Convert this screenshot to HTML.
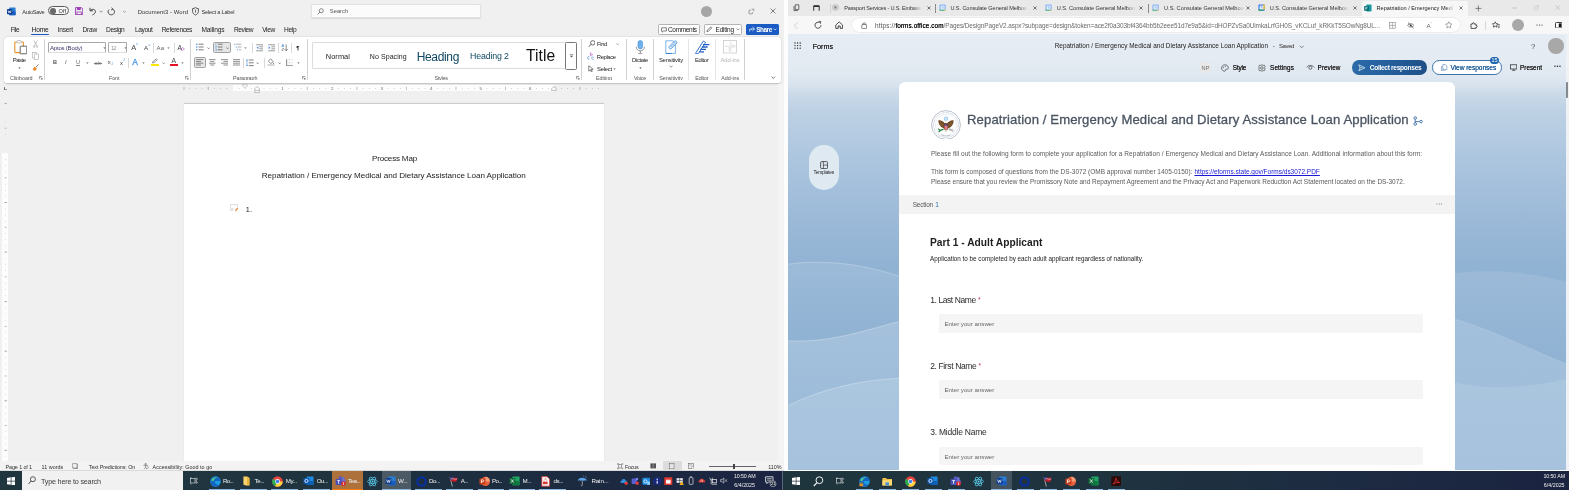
<!DOCTYPE html>
<html lang="en"><head><meta charset="utf-8"><title>Word and Microsoft Forms</title>
<style>
html,body{margin:0;padding:0;}
body{width:1569px;height:490px;overflow:hidden;position:relative;background:#f0f0f0;font-family:"Liberation Sans", sans-serif;}
div,span,svg,a{position:absolute;box-sizing:border-box;}
span,a{white-space:nowrap;line-height:1;display:block;}
a{text-decoration:underline;}
.root{left:0;top:0;width:1569px;height:490px;overflow:hidden;will-change:transform;}
</style></head>
<body>
<div class="root">
<div style="left:0px;top:0px;width:784.2px;height:471.5px;background:#f0f0f0;"></div>
<div style="left:784.2px;top:0px;width:4.0px;height:471.5px;background:#fdfdfd;"></div>
<svg style="left:7px;top:7px;" width="9" height="9" viewBox="0 0 9 9"><rect x="2.2" y="0.6" width="6.4" height="7.6" rx="0.8" fill="#2b7cd3"/><rect x="2.2" y="4.4" width="6.4" height="3.8" fill="#185abd"/><rect x="0" y="2" width="5.2" height="5.2" rx="0.6" fill="#103f91"/><path d="M1.1 3.3 L1.9 6 L2.6 4 L3.3 6 L4.1 3.3" stroke="#fff" stroke-width="0.6" fill="none"/></svg>
<span style="left:22.30px;top:8px;font-size:5.6px;height:8px;line-height:8px;color:#333;letter-spacing:-0.271px;">AutoSave</span>
<div style="left:48.2px;top:6.4px;width:20.7px;height:9.0px;background:#f8f8f8;border:0.65px solid #5a5a5a;border-radius:4.5px;"></div>
<div style="left:50.0px;top:8.1px;width:5.7px;height:5.7px;background:#6a6a6a;border-radius:50%;"></div>
<span style="left:58.60px;top:7px;font-size:5.6px;height:8px;line-height:8px;color:#333;letter-spacing:0.080px;">Off</span>
<svg style="left:75px;top:7px;" width="8.4" height="8.4" viewBox="0 0 8.4 8.4"><path d="M0.6 0.6 H6.4 L7.8 2 V7.8 H0.6 Z" fill="none" stroke="#9b3fb5" stroke-width="1"/><rect x="2" y="0.8" width="3.8" height="2.2" fill="#9b3fb5"/><rect x="2" y="5" width="4.4" height="2.8" fill="none" stroke="#9b3fb5" stroke-width="0.8"/></svg>
<svg style="left:88.5px;top:7px;" width="8" height="8.5" viewBox="0 0 8 8.5"><path d="M1 0.8 V3.8 H4" fill="none" stroke="#333" stroke-width="0.9"/><path d="M1.2 3.6 C3 1.6 6.4 2 6.4 4.6 C6.4 6.2 5 7.2 3.4 8" fill="none" stroke="#333" stroke-width="0.9"/></svg>
<svg style="left:99px;top:10px;" width="4" height="3" viewBox="0 0 4 3"><path d="M0.5 0.7 L2 2.2 L3.5 0.7" fill="none" stroke="#666" stroke-width="0.7"/></svg>
<svg style="left:106.5px;top:7px;" width="8.5" height="8.5" viewBox="0 0 8.5 8.5"><path d="M4.6 0.6 L6 2.2 L4 3" fill="none" stroke="#333" stroke-width="0.8"/><path d="M6 2.4 C8.4 3.6 8 7.6 4.4 7.8 C1.2 7.8 0.2 4.4 2 2.6" fill="none" stroke="#333" stroke-width="0.9"/></svg>
<svg style="left:121.5px;top:10px;" width="5" height="3" viewBox="0 0 5 3"><path d="M1 1 L2.5 2.3 L4 1" fill="none" stroke="#888" stroke-width="0.7"/></svg>
<span style="left:137.70px;top:8px;font-size:5.9px;height:8px;line-height:8px;color:#333;letter-spacing:0.065px;">Document3  -  Word</span>
<svg style="left:191.5px;top:7.2px;" width="7" height="8.5" viewBox="0 0 7 8.5"><path d="M3.5 0.6 C4.6 1.4 5.6 1.6 6.4 1.6 V4.4 C6.4 6.2 5 7.4 3.5 8 C2 7.4 0.6 6.2 0.6 4.4 V1.6 C1.4 1.6 2.4 1.4 3.5 0.6 Z" fill="none" stroke="#333" stroke-width="0.8"/><path d="M3.5 2.6 V5.6" stroke="#333" stroke-width="0.7"/></svg>
<span style="left:201.50px;top:8px;font-size:5.6px;height:8px;line-height:8px;color:#333;letter-spacing:-0.197px;">Select a Label</span>
<div style="left:310.7px;top:3.6px;width:170.6px;height:14.3px;background:#fbfbfb;border:0.6px solid #e2e2e2;border-radius:2px;box-shadow:0 0.5px 1px rgba(0,0,0,0.10);"></div>
<svg style="left:316.5px;top:7.5px;" width="7" height="7" viewBox="0 0 7 7"><circle cx="4.3" cy="2.7" r="2" fill="none" stroke="#555" stroke-width="0.7"/><path d="M2.9 4.2 L0.6 6.4" stroke="#555" stroke-width="0.7"/></svg>
<span style="left:329.80px;top:7px;font-size:5.8px;height:8px;line-height:8px;color:#555;letter-spacing:0.004px;">Search</span>
<div style="left:700.7px;top:5.6px;width:11.3px;height:11.3px;background:#a6a6a6;border-radius:50%;"></div>
<svg style="left:747.5px;top:8px;" width="7" height="7" viewBox="0 0 7 7"><path d="M3 2.2 H1.6 C1.2 2.2 1 2.4 1 2.8 V5.2 C1 5.6 1.2 5.8 1.6 5.8 H4 C4.4 5.8 4.6 5.6 4.6 5.2 V4.2" fill="none" stroke="#666" stroke-width="0.6"/><path d="M3.6 1.2 H5.8 V3.2" fill="none" stroke="#666" stroke-width="0.6"/></svg>
<svg style="left:770.4px;top:8.4px;" width="6" height="6" viewBox="0 0 6 6"><path d="M0.6 0.6 L5.4 5.4 M5.4 0.6 L0.6 5.4" stroke="#333" stroke-width="0.6"/></svg>
<span style="left:10.80px;top:25px;font-size:6.6px;height:9px;line-height:9px;color:#222;letter-spacing:-0.606px;">File</span>
<span style="left:31.60px;top:25px;font-size:6.6px;height:9px;line-height:9px;color:#111;letter-spacing:-0.173px;">Home</span>
<span style="left:57.60px;top:25px;font-size:6.6px;height:9px;line-height:9px;color:#222;letter-spacing:-0.183px;">Insert</span>
<span style="left:82.60px;top:25px;font-size:6.6px;height:9px;line-height:9px;color:#222;letter-spacing:-0.248px;">Draw</span>
<span style="left:106.00px;top:25px;font-size:6.6px;height:9px;line-height:9px;color:#222;letter-spacing:-0.355px;">Design</span>
<span style="left:135.00px;top:25px;font-size:6.6px;height:9px;line-height:9px;color:#222;letter-spacing:-0.402px;">Layout</span>
<span style="left:161.70px;top:25px;font-size:6.6px;height:9px;line-height:9px;color:#222;letter-spacing:-0.343px;">References</span>
<span style="left:201.50px;top:25px;font-size:6.6px;height:9px;line-height:9px;color:#222;letter-spacing:-0.148px;">Mailings</span>
<span style="left:234.00px;top:25px;font-size:6.6px;height:9px;line-height:9px;color:#222;letter-spacing:-0.438px;">Review</span>
<span style="left:262.20px;top:25px;font-size:6.6px;height:9px;line-height:9px;color:#222;letter-spacing:-0.347px;">View</span>
<span style="left:284.00px;top:25px;font-size:6.6px;height:9px;line-height:9px;color:#222;letter-spacing:-0.291px;">Help</span>
<div style="left:31.4px;top:33.8px;width:17.3px;height:1.1px;background:#185abd;border-radius:0.5px;"></div>
<div style="left:658.2px;top:24.0px;width:41.6px;height:11.0px;background:#fdfdfd;border:0.6px solid #b4b4b4;border-radius:1.5px;"></div>
<svg style="left:660.8px;top:26.6px;" width="6" height="6" viewBox="0 0 6 6"><path d="M0.6 0.8 H5.4 V4 H2.4 L1.2 5.2 V4 H0.6 Z" fill="none" stroke="#333" stroke-width="0.6"/></svg>
<span style="left:668.00px;top:25px;font-size:6.5px;height:9px;line-height:9px;color:#1a1a1a;letter-spacing:-0.330px;">Comments</span>
<div style="left:704.2px;top:24.0px;width:37.6px;height:11.0px;background:#fdfdfd;border:0.6px solid #b4b4b4;border-radius:1.5px;"></div>
<svg style="left:706.4px;top:26.4px;" width="7" height="6.4" viewBox="0 0 7 6.4"><path d="M0.8 5.6 L1.4 4 L5 0.8 L6 1.8 L2.4 5.2 Z" fill="none" stroke="#333" stroke-width="0.6"/></svg>
<span style="left:715.60px;top:25px;font-size:6.5px;height:9px;line-height:9px;color:#1a1a1a;letter-spacing:-0.239px;">Editing</span>
<svg style="left:736px;top:28.4px;" width="4" height="3" viewBox="0 0 4 3"><path d="M0.6 0.6 L2 2 L3.4 0.6" fill="none" stroke="#555" stroke-width="0.6"/></svg>
<div style="left:746.2px;top:24.0px;width:33.0px;height:11.0px;background:#1b5cc4;border-radius:1.5px;"></div>
<svg style="left:748.6px;top:26.4px;" width="6.4" height="6.4" viewBox="0 0 6.4 6.4"><path d="M0.7 5.6 V3.2 H3 M3.4 1 L5.6 3 L3.4 5 M5.4 3 H2.2" fill="none" stroke="#fff" stroke-width="0.7"/></svg>
<span style="left:756.20px;top:25px;font-size:6.5px;height:9px;line-height:9px;color:#fff;font-weight:700;letter-spacing:-0.496px;">Share</span>
<svg style="left:773.2px;top:28.4px;" width="4" height="3" viewBox="0 0 4 3"><path d="M0.6 0.6 L2 2 L3.4 0.6" fill="none" stroke="#fff" stroke-width="0.6"/></svg>
<div style="left:4px;top:36.8px;width:776.6px;height:46.0px;background:#ffffff;border-radius:3.5px;box-shadow:0 0.6px 1.6px rgba(0,0,0,0.22);"></div>
<svg style="left:13.6px;top:40.3px;" width="13.6" height="14.4" viewBox="0 0 13.6 14.4"><rect x="0.8" y="2" width="8.6" height="10.6" rx="0.8" fill="#fff" stroke="#e8912d" stroke-width="1.1"/><rect x="3" y="0.6" width="4.2" height="2.4" rx="0.6" fill="#fff" stroke="#9a9a9a" stroke-width="0.6"/><rect x="6.2" y="6.2" width="6.6" height="7.6" rx="0.5" fill="#fff" stroke="#444" stroke-width="0.8"/></svg>
<span style="left:12.80px;top:56px;font-size:5.9px;height:8px;line-height:8px;color:#222;letter-spacing:-0.456px;">Paste</span>
<svg style="left:17.7px;top:66.69999999999999px;" width="3.0" height="2.0" viewBox="0 0 3.0 2.0"><path d="M0.3 0.4 H2.7 L1.5 1.7 Z" fill="#333"/></svg>
<svg style="left:33.2px;top:40.4px;" width="5.2" height="7.8" viewBox="0 0 5.2 7.8"><path d="M0.8 0.4 L4 6 M4.4 0.4 L1.2 6" stroke="#9a9a9a" stroke-width="0.6"/><circle cx="1.1" cy="6.6" r="0.8" fill="none" stroke="#9a9a9a" stroke-width="0.5"/><circle cx="4.1" cy="6.6" r="0.8" fill="none" stroke="#9a9a9a" stroke-width="0.5"/></svg>
<svg style="left:32.4px;top:51.8px;" width="7" height="8" viewBox="0 0 7 8"><rect x="0.5" y="0.5" width="4" height="5.4" fill="none" stroke="#aaa" stroke-width="0.6"/><rect x="2.4" y="2" width="4" height="5.4" fill="#fff" stroke="#aaa" stroke-width="0.6"/></svg>
<svg style="left:32.2px;top:63.8px;" width="7.4" height="7.6" viewBox="0 0 7.4 7.6"><path d="M4.2 3 L6.4 0.6" stroke="#555" stroke-width="0.8"/><path d="M2.6 2.6 L5 4.8 L3 7 L0.6 5.4 Z" fill="#e8862a"/></svg>
<div style="left:44.2px;top:39.2px;width:0.8px;height:41.0px;background:#d2d2d2;"></div>
<span style="left:10.00px;top:74px;font-size:5.4px;height:8px;line-height:8px;color:#555;letter-spacing:-0.064px;">Clipboard</span>
<svg style="left:39.2px;top:76.2px;" width="3.6" height="3.6" viewBox="0 0 3.6 3.6"><path d="M0.4 3.2 V0.4 H3.2" fill="none" stroke="#555" stroke-width="0.6"/><path d="M1.6 1.6 L3.2 3.2 M3.2 1.8 V3.2 H1.8" fill="none" stroke="#555" stroke-width="0.6"/></svg>
<div style="left:48.2px;top:42.0px;width:58.3px;height:10.7px;background:#fff;border:0.6px solid #a8a8a8;border-bottom-color:#dedede;border-radius:1.5px;"></div>
<span style="left:50.00px;top:44px;font-size:6.0px;height:8px;line-height:8px;color:#3a3a6a;letter-spacing:-0.199px;">Aptos (Body)</span>
<svg style="left:102.5px;top:46.7px;" width="3.0" height="2.0" viewBox="0 0 3.0 2.0"><path d="M0.3 0.4 H2.7 L1.5 1.7 Z" fill="#555"/></svg>
<div style="left:108.4px;top:42.0px;width:19.1px;height:10.7px;background:#fff;border:0.6px solid #a8a8a8;border-bottom-color:#dedede;border-radius:1.5px;"></div>
<span style="left:111.00px;top:44px;font-size:6.0px;height:8px;line-height:8px;color:#999;letter-spacing:-1.144px;">12</span>
<svg style="left:123.5px;top:46.7px;" width="3.0" height="2.0" viewBox="0 0 3.0 2.0"><path d="M0.3 0.4 H2.7 L1.5 1.7 Z" fill="#555"/></svg>
<span style="left:131.20px;top:42px;font-size:7.4px;height:11px;line-height:11px;color:#444;letter-spacing:0.062px;">A</span>
<svg style="left:136.0px;top:43.4px;" width="2.4" height="2.2" viewBox="0 0 2.4 2.2"><path d="M0.3 1.8 L1.2 0.5 L2.1 1.8" fill="none" stroke="#2b7cd3" stroke-width="0.5"/></svg>
<span style="left:144.00px;top:43px;font-size:6.2px;height:9px;line-height:9px;color:#444;letter-spacing:0.059px;">A</span>
<svg style="left:148.2px;top:44.2px;" width="2.4" height="2.2" viewBox="0 0 2.4 2.2"><path d="M0.3 0.5 L1.2 1.8 L2.1 0.5" fill="none" stroke="#2b7cd3" stroke-width="0.5"/></svg>
<div style="left:153.0px;top:42.5px;width:0.8px;height:10.0px;background:#d8d8d8;"></div>
<span style="left:156.60px;top:44px;font-size:6.0px;height:8px;line-height:8px;color:#666;letter-spacing:0.128px;">Aa</span>
<svg style="left:166.5px;top:46.9px;" width="3.0" height="2.0" viewBox="0 0 3.0 2.0"><path d="M0.3 0.4 H2.7 L1.5 1.7 Z" fill="#555"/></svg>
<div style="left:174.1px;top:42.5px;width:0.8px;height:10.0px;background:#d8d8d8;"></div>
<span style="left:177.50px;top:43px;font-size:6.8px;height:9px;line-height:9px;color:#444;letter-spacing:-0.047px;">A</span>
<svg style="left:180.4px;top:46.6px;" width="5" height="4.4" viewBox="0 0 5 4.4"><path d="M0.6 2.4 L2.6 0.6 L4.4 2 L2.4 3.8 Z" fill="none" stroke="#b146c2" stroke-width="0.6"/></svg>
<span style="left:53.00px;top:58px;font-size:5.6px;height:8px;line-height:8px;color:#555;font-weight:700;letter-spacing:-0.647px;">B</span>
<span style="left:65.00px;top:58px;font-size:5.6px;height:8px;line-height:8px;color:#555;font-style:italic;letter-spacing:0.037px;">I</span>
<span style="left:76.00px;top:58px;font-size:5.6px;height:8px;line-height:8px;color:#666;letter-spacing:-0.047px;">U</span>
<div style="left:76.0px;top:65.4px;width:4.2px;height:0.5px;background:#888;"></div>
<svg style="left:85.5px;top:61.9px;" width="3.0" height="2.0" viewBox="0 0 3.0 2.0"><path d="M0.3 0.4 H2.7 L1.5 1.7 Z" fill="#555"/></svg>
<span style="left:94.60px;top:59px;font-size:5.6px;height:8px;line-height:8px;color:#888;letter-spacing:0.183px;">ab</span>
<div style="left:94.2px;top:62.6px;width:7.4px;height:0.5px;background:#777;"></div>
<span style="left:107.80px;top:58px;font-size:5.8px;height:8px;line-height:8px;color:#444;letter-spacing:0.094px;">x</span>
<span style="left:111.40px;top:62px;font-size:2.7px;height:5px;line-height:5px;color:#2b7cd3;letter-spacing:-0.100px;">2</span>
<span style="left:120.00px;top:59px;font-size:5.8px;height:8px;line-height:8px;color:#444;letter-spacing:0.094px;">x</span>
<span style="left:123.60px;top:58px;font-size:2.7px;height:5px;line-height:5px;color:#2b7cd3;letter-spacing:-0.100px;">2</span>
<div style="left:128.2px;top:57.5px;width:0.8px;height:10.0px;background:#d8d8d8;"></div>
<span style="left:132.20px;top:56px;font-size:8.4px;height:12px;line-height:12px;color:#3a8ee6;letter-spacing:0.806px;-webkit-text-stroke:0.25px #3a8ee6;">A</span>
<svg style="left:141.5px;top:61.9px;" width="3.0" height="2.0" viewBox="0 0 3.0 2.0"><path d="M0.3 0.4 H2.7 L1.5 1.7 Z" fill="#555"/></svg>
<svg style="left:151.4px;top:58.4px;" width="7.4" height="5.6" viewBox="0 0 7.4 5.6"><path d="M1.4 5 L2 3.4 L5.4 0.8 L6.4 1.8 L3 4.6 Z" fill="none" stroke="#555" stroke-width="0.6"/></svg>
<div style="left:151.0px;top:64.2px;width:8.2px;height:1.6px;background:#ffe500;"></div>
<svg style="left:161.9px;top:61.5px;" width="3.4" height="2.4" viewBox="0 0 3.4 2.4"><path d="M0.4 0.5 L1.7 1.8 L3 0.5" fill="none" stroke="#555" stroke-width="0.6"/></svg>
<span style="left:171.60px;top:56px;font-size:6.8px;height:9px;line-height:9px;color:#444;letter-spacing:0.453px;">A</span>
<div style="left:170.2px;top:64.2px;width:8.2px;height:1.6px;background:#e81123;"></div>
<svg style="left:181.1px;top:61.9px;" width="3.0" height="2.0" viewBox="0 0 3.0 2.0"><path d="M0.3 0.4 H2.7 L1.5 1.7 Z" fill="#555"/></svg>
<span style="left:109.00px;top:74px;font-size:5.4px;height:8px;line-height:8px;color:#555;letter-spacing:-0.124px;">Font</span>
<svg style="left:185.4px;top:76.2px;" width="3.6" height="3.6" viewBox="0 0 3.6 3.6"><path d="M0.4 3.2 V0.4 H3.2" fill="none" stroke="#555" stroke-width="0.6"/><path d="M1.6 1.6 L3.2 3.2 M3.2 1.8 V3.2 H1.8" fill="none" stroke="#555" stroke-width="0.6"/></svg>
<div style="left:190.29999999999998px;top:39.2px;width:0.8px;height:41.0px;background:#d2d2d2;"></div>
<svg style="left:195.6px;top:43.4px;" width="8" height="8" viewBox="0 0 8 8"><path d="M2.6 1.2 H7.6" stroke="#444" stroke-width="0.7"/><path d="M2.6 4 H7.6" stroke="#444" stroke-width="0.7"/><path d="M2.6 6.8 H7.6" stroke="#444" stroke-width="0.7"/><circle cx="0.8" cy="1.2" r="0.7" fill="#2b7cd3"/><circle cx="0.8" cy="4" r="0.7" fill="#2b7cd3"/><circle cx="0.8" cy="6.8" r="0.7" fill="#2b7cd3"/></svg>
<svg style="left:206.8px;top:46.699999999999996px;" width="3.4" height="2.4" viewBox="0 0 3.4 2.4"><path d="M0.4 0.5 L1.7 1.8 L3 0.5" fill="none" stroke="#444" stroke-width="0.6"/></svg>
<div style="left:213.2px;top:42.0px;width:18.2px;height:10.7px;background:#e6e6e6;border:0.6px solid #a2a2a2;border-radius:1.6px;"></div>
<svg style="left:214.9px;top:43.4px;" width="8" height="8" viewBox="0 0 8 8"><path d="M2.8 1.2 H7.6" stroke="#444" stroke-width="0.7"/><path d="M2.8 4 H7.6" stroke="#444" stroke-width="0.7"/><path d="M2.8 6.8 H7.6" stroke="#444" stroke-width="0.7"/><path d="M0.9 0.2 V2.2 M0.3 3.2 H1.4 V4.2 H0.3 M0.3 5.8 H1.4 V7.8 H0.3" fill="none" stroke="#2b7cd3" stroke-width="0.45"/></svg>
<svg style="left:225.70000000000002px;top:46.699999999999996px;" width="3.4" height="2.4" viewBox="0 0 3.4 2.4"><path d="M0.4 0.5 L1.7 1.8 L3 0.5" fill="none" stroke="#444" stroke-width="0.6"/></svg>
<svg style="left:234.4px;top:43.4px;" width="8" height="8" viewBox="0 0 8 8"><path d="M2.2 1.2 H7.4" stroke="#777" stroke-width="0.6"/><path d="M3.6 4 H7.4" stroke="#777" stroke-width="0.6"/><path d="M5 6.8 H7.4" stroke="#777" stroke-width="0.6"/><circle cx="0.8" cy="1.2" r="0.55" fill="#2b7cd3"/><circle cx="2.2" cy="4" r="0.55" fill="#2b7cd3"/><circle cx="3.6" cy="6.8" r="0.55" fill="#2b7cd3"/></svg>
<svg style="left:244.2px;top:46.9px;" width="3.0" height="2.0" viewBox="0 0 3.0 2.0"><path d="M0.3 0.4 H2.7 L1.5 1.7 Z" fill="#666"/></svg>
<div style="left:252.1px;top:42.5px;width:0.8px;height:10.0px;background:#d8d8d8;"></div>
<svg style="left:255.7px;top:43.6px;" width="8" height="8" viewBox="0 0 8 8"><path d="M0.2 0.8 H7" stroke="#444" stroke-width="0.55"/><path d="M3.4 2.8 H7" stroke="#444" stroke-width="0.55"/><path d="M3.4 4.8 H7" stroke="#444" stroke-width="0.55"/><path d="M0.2 6.8 H7" stroke="#444" stroke-width="0.55"/><path d="M2.4 2.6 L0.6 3.8 L2.4 5 Z" fill="#2b7cd3"/></svg>
<svg style="left:268.0px;top:43.6px;" width="8" height="8" viewBox="0 0 8 8"><path d="M0.2 0.8 H7" stroke="#444" stroke-width="0.55"/><path d="M3.4 2.8 H7" stroke="#444" stroke-width="0.55"/><path d="M3.4 4.8 H7" stroke="#444" stroke-width="0.55"/><path d="M0.2 6.8 H7" stroke="#444" stroke-width="0.55"/><path d="M0.6 2.6 L2.4 3.8 L0.6 5 Z" fill="#2b7cd3"/></svg>
<div style="left:278.20000000000005px;top:42.5px;width:0.8px;height:10.0px;background:#d8d8d8;"></div>
<span style="left:281.40px;top:42px;font-size:4.0px;height:7px;line-height:7px;color:#2b7cd3;letter-spacing:0.128px;">A</span>
<span style="left:281.40px;top:46px;font-size:4.0px;height:7px;line-height:7px;color:#444;letter-spacing:0.347px;">Z</span>
<svg style="left:284.4px;top:43.6px;" width="4.6" height="8" viewBox="0 0 4.6 8"><path d="M2.2 0.4 V6.6 M0.6 5 L2.2 6.8 L3.8 5" fill="none" stroke="#444" stroke-width="0.6"/></svg>
<div style="left:291.20000000000005px;top:42.5px;width:0.8px;height:10.0px;background:#d8d8d8;"></div>
<span style="left:296.20px;top:44px;font-size:5.6px;height:8px;line-height:8px;color:#222;font-weight:700;letter-spacing:0.475px;">¶</span>
<div style="left:194.0px;top:57.0px;width:12.0px;height:10.7px;background:#e6e6e6;border:0.6px solid #a2a2a2;border-radius:1.6px;"></div>
<svg style="left:196.2px;top:59.0px;" width="8" height="7" viewBox="0 0 8 7"><path d="M0 0.6 H7.4" stroke="#444" stroke-width="0.6"/><path d="M0 2.4 H5" stroke="#444" stroke-width="0.6"/><path d="M0 4.2 H7.4" stroke="#444" stroke-width="0.6"/><path d="M0 6 H5" stroke="#444" stroke-width="0.6"/></svg>
<svg style="left:208.9px;top:59.0px;" width="8" height="7" viewBox="0 0 8 7"><path d="M0 0.6 H6.6" stroke="#444" stroke-width="0.6"/><path d="M1.2 2.4 H5.4" stroke="#444" stroke-width="0.6"/><path d="M0 4.2 H6.6" stroke="#444" stroke-width="0.6"/><path d="M1.2 6 H5.4" stroke="#444" stroke-width="0.6"/></svg>
<svg style="left:220.8px;top:59.0px;" width="8" height="7" viewBox="0 0 8 7"><path d="M0 0.6 H7" stroke="#444" stroke-width="0.6"/><path d="M2.4 2.4 H7" stroke="#444" stroke-width="0.6"/><path d="M0 4.2 H7" stroke="#444" stroke-width="0.6"/><path d="M2.4 6 H7" stroke="#444" stroke-width="0.6"/></svg>
<svg style="left:232.8px;top:59.0px;" width="8" height="7" viewBox="0 0 8 7"><path d="M0 0.6 H7" stroke="#444" stroke-width="0.6"/><path d="M0 2.4 H7" stroke="#444" stroke-width="0.6"/><path d="M0 4.2 H7" stroke="#444" stroke-width="0.6"/><path d="M0 6 H7" stroke="#444" stroke-width="0.6"/></svg>
<div style="left:243.1px;top:57.5px;width:0.8px;height:10.0px;background:#d8d8d8;"></div>
<svg style="left:246.0px;top:58.6px;" width="8" height="8" viewBox="0 0 8 8"><path d="M2.8 1 H7.6" stroke="#444" stroke-width="0.7"/><path d="M2.8 3.8 H7.6" stroke="#444" stroke-width="0.7"/><path d="M2.8 6.6 H7.6" stroke="#444" stroke-width="0.7"/><path d="M1 0.6 V7 M0.2 1.8 L1 0.6 L1.8 1.8 M0.2 5.8 L1 7 L1.8 5.8" fill="none" stroke="#2b7cd3" stroke-width="0.5"/></svg>
<svg style="left:255.90000000000003px;top:61.699999999999996px;" width="3.4" height="2.4" viewBox="0 0 3.4 2.4"><path d="M0.4 0.5 L1.7 1.8 L3 0.5" fill="none" stroke="#444" stroke-width="0.6"/></svg>
<div style="left:264.20000000000005px;top:57.5px;width:0.8px;height:10.0px;background:#d8d8d8;"></div>
<svg style="left:267.0px;top:58.4px;" width="8" height="8" viewBox="0 0 8 8"><path d="M3.6 0.8 L6.2 3.6 L3.8 5.6 L1.4 3.2 Z" fill="none" stroke="#444" stroke-width="0.6"/><path d="M6.6 4.4 C7.2 5.2 7.2 5.8 6.6 5.8 C6 5.8 6 5.2 6.6 4.4 Z" fill="#444"/><rect x="0.4" y="6.4" width="7.2" height="1.2" fill="#bdbdbd"/></svg>
<svg style="left:277.90000000000003px;top:61.699999999999996px;" width="3.4" height="2.4" viewBox="0 0 3.4 2.4"><path d="M0.4 0.5 L1.7 1.8 L3 0.5" fill="none" stroke="#444" stroke-width="0.6"/></svg>
<svg style="left:285.9px;top:58.6px;" width="7.4" height="7.4" viewBox="0 0 7.4 7.4"><path d="M0.6 0.4 V6.8 H7" fill="none" stroke="#333" stroke-width="0.6"/><path d="M3.6 0.4 V6.4 M0.8 3.6 H7 M7 0.4 V6.4 M0.8 0.6 H7" stroke="#aaa" stroke-width="0.4" stroke-dasharray="0.6 0.6"/></svg>
<svg style="left:296.9px;top:61.9px;" width="3.0" height="2.0" viewBox="0 0 3.0 2.0"><path d="M0.3 0.4 H2.7 L1.5 1.7 Z" fill="#555"/></svg>
<span style="left:233.00px;top:74px;font-size:5.4px;height:8px;line-height:8px;color:#555;letter-spacing:-0.099px;">Paragraph</span>
<svg style="left:302.0px;top:76.2px;" width="3.6" height="3.6" viewBox="0 0 3.6 3.6"><path d="M0.4 3.2 V0.4 H3.2" fill="none" stroke="#555" stroke-width="0.6"/><path d="M1.6 1.6 L3.2 3.2 M3.2 1.8 V3.2 H1.8" fill="none" stroke="#555" stroke-width="0.6"/></svg>
<div style="left:306.90000000000003px;top:39.2px;width:0.8px;height:41.0px;background:#d2d2d2;"></div>
<div style="left:312.2px;top:42.2px;width:264.4px;height:27.3px;background:#fff;border:0.6px solid #dcdcdc;border-radius:1px;"></div>
<span style="left:325.80px;top:51px;font-size:7.4px;height:11px;line-height:11px;color:#222;letter-spacing:0.062px;">Normal</span>
<span style="left:369.80px;top:52px;font-size:7.0px;height:9px;line-height:9px;color:#222;letter-spacing:0.080px;">No Spacing</span>
<span style="left:416.70px;top:49px;font-size:12.0px;height:16px;line-height:16px;color:#0f4761;letter-spacing:-0.343px;">Heading</span>
<div style="left:459.2px;top:44px;width:8px;height:24px;background:#fff;"></div>
<span style="left:470.00px;top:50px;font-size:8.8px;height:12px;line-height:12px;color:#0f4761;letter-spacing:-0.145px;">Heading 2</span>
<span style="left:526.00px;top:46px;font-size:15.6px;height:19px;line-height:19px;color:#111;letter-spacing:0.082px;">Title</span>
<div style="left:565.2px;top:42.0px;width:11.5px;height:27.5px;background:#fff;border:0.7px solid #777;border-radius:1.5px;"></div>
<svg style="left:568.6px;top:53.6px;" width="5" height="4.4" viewBox="0 0 5 4.4"><path d="M0.8 0.6 H4.2" stroke="#555" stroke-width="0.6"/><path d="M0.9 1.8 L2.5 3.4 L4.1 1.8 Z" fill="#555"/></svg>
<span style="left:434.60px;top:74px;font-size:5.4px;height:8px;line-height:8px;color:#555;letter-spacing:-0.281px;">Styles</span>
<svg style="left:576.0px;top:76.2px;" width="3.6" height="3.6" viewBox="0 0 3.6 3.6"><path d="M0.4 3.2 V0.4 H3.2" fill="none" stroke="#555" stroke-width="0.6"/><path d="M1.6 1.6 L3.2 3.2 M3.2 1.8 V3.2 H1.8" fill="none" stroke="#555" stroke-width="0.6"/></svg>
<div style="left:581.3000000000001px;top:39.2px;width:0.8px;height:41.0px;background:#d2d2d2;"></div>
<svg style="left:587.6px;top:39.8px;" width="7.6" height="7.4" viewBox="0 0 7.6 7.4"><circle cx="4.8" cy="2.8" r="2.2" fill="none" stroke="#333" stroke-width="0.7"/><path d="M3.2 4.4 L0.6 6.8" stroke="#333" stroke-width="0.8"/></svg>
<span style="left:597.00px;top:40px;font-size:5.9px;height:8px;line-height:8px;color:#222;letter-spacing:-0.367px;">Find</span>
<svg style="left:615.5px;top:43.1px;" width="3.4" height="2.4" viewBox="0 0 3.4 2.4"><path d="M0.4 0.5 L1.7 1.8 L3 0.5" fill="none" stroke="#666" stroke-width="0.6"/></svg>
<svg style="left:587.0px;top:52.2px;" width="7.4" height="8" viewBox="0 0 7.4 8"><path d="M3.4 0.4 V3.4 M3.4 2.2 C4.6 1.4 5.6 2 5.4 3 C5.2 3.8 4 3.8 3.4 3.2" fill="none" stroke="#b146c2" stroke-width="0.6"/><path d="M2.4 4.4 C1 4.4 0.6 5.2 0.6 6 C0.6 7 1.4 7.4 2.4 7.2 M4.4 5.4 C5.2 4.8 6.4 5 6.6 5.6 M6.6 7.2 C5.4 7.6 4.6 7 4.6 6.4" fill="none" stroke="#2b7cd3" stroke-width="0.6"/></svg>
<span style="left:596.80px;top:53px;font-size:5.9px;height:8px;line-height:8px;color:#222;letter-spacing:-0.389px;">Replace</span>
<svg style="left:587.8px;top:64.6px;" width="6" height="7.6" viewBox="0 0 6 7.6"><path d="M0.8 0.6 V6.2 L2.4 4.8 L3.4 7 L4.2 6.6 L3.2 4.4 H5.2 Z" fill="none" stroke="#333" stroke-width="0.6"/></svg>
<span style="left:597.00px;top:65px;font-size:5.9px;height:8px;line-height:8px;color:#222;letter-spacing:-0.229px;">Select</span>
<svg style="left:612.9px;top:67.89999999999999px;" width="3.0" height="2.0" viewBox="0 0 3.0 2.0"><path d="M0.3 0.4 H2.7 L1.5 1.7 Z" fill="#555"/></svg>
<span style="left:596.00px;top:74px;font-size:5.4px;height:8px;line-height:8px;color:#555;letter-spacing:-0.069px;">Editing</span>
<div style="left:626.1px;top:39.2px;width:0.8px;height:41.0px;background:#d2d2d2;"></div>
<svg style="left:635.0px;top:39.6px;" width="10.6" height="14.6" viewBox="0 0 10.6 14.6"><rect x="3" y="0.5" width="4.6" height="8.4" rx="2.3" fill="#6fb1ea" stroke="#2b7cd3" stroke-width="0.5"/><path d="M1.2 6.6 C1.2 9.6 3.2 10.8 5.3 10.8 C7.4 10.8 9.4 9.6 9.4 6.6 M5.3 10.8 V13.4 M3.4 13.6 H7.2" fill="none" stroke="#555" stroke-width="0.6"/></svg>
<span style="left:632.00px;top:56px;font-size:5.9px;height:8px;line-height:8px;color:#222;letter-spacing:-0.335px;">Dictate</span>
<svg style="left:638.7px;top:66.69999999999999px;" width="3.0" height="2.0" viewBox="0 0 3.0 2.0"><path d="M0.3 0.4 H2.7 L1.5 1.7 Z" fill="#333"/></svg>
<span style="left:634.00px;top:74px;font-size:5.4px;height:8px;line-height:8px;color:#555;letter-spacing:-0.258px;">Voice</span>
<div style="left:653.1px;top:39.2px;width:0.8px;height:41.0px;background:#d2d2d2;"></div>
<svg style="left:665.4px;top:39.6px;" width="13.4" height="14.6" viewBox="0 0 13.4 14.6"><path d="M0.8 0.8 H8 L10.4 3.2 V13.4 H0.8 Z" fill="#fff" stroke="#2b7cd3" stroke-width="0.6"/><path d="M4 6.6 L9.6 1 C10.6 0 12.8 2 11.8 3.2 L6.2 8.8 C5.2 9.8 3 7.6 4 6.6 Z" fill="#cfe3f8" stroke="#2b7cd3" stroke-width="0.6"/><path d="M5.6 5.4 L7.6 7.4 M7.2 3.8 L9.2 5.8 M8.8 2.2 L10.8 4.2" stroke="#2b7cd3" stroke-width="0.5"/><path d="M0.8 13.6 H7" stroke="#2b7cd3" stroke-width="0.9"/></svg>
<span style="left:658.90px;top:56px;font-size:5.9px;height:8px;line-height:8px;color:#222;letter-spacing:-0.230px;">Sensitivity</span>
<svg style="left:668.6px;top:65.4px;" width="4.2" height="3" viewBox="0 0 4.2 3"><path d="M0.6 0.6 L2.1 2.2 L3.6 0.6" fill="none" stroke="#555" stroke-width="0.6"/></svg>
<span style="left:659.20px;top:74px;font-size:5.4px;height:8px;line-height:8px;color:#555;letter-spacing:-0.053px;">Sensitivity</span>
<div style="left:688.4px;top:39.2px;width:0.8px;height:41.0px;background:#e6e6e6;"></div>
<svg style="left:694.6px;top:39.6px;" width="15" height="14.6" viewBox="0 0 15 14.6"><path d="M1 12.6 L8.4 1 L10.6 2.4 L3.4 13.6 L0.8 14 Z" fill="#fff" stroke="#1f5fc8" stroke-width="0.9"/><path d="M8 4.6 H14.4 M6.8 7 H12.6 M5.4 9.4 H11 M4.4 11.8 H9" stroke="#1f5fc8" stroke-width="1.3"/></svg>
<span style="left:695.00px;top:56px;font-size:5.9px;height:8px;line-height:8px;color:#222;letter-spacing:-0.332px;">Editor</span>
<span style="left:695.20px;top:74px;font-size:5.4px;height:8px;line-height:8px;color:#555;letter-spacing:-0.149px;">Editor</span>
<div style="left:715.0px;top:39.2px;width:0.8px;height:41.0px;background:#e6e6e6;"></div>
<svg style="left:723.0px;top:40.2px;" width="14.2" height="13.6" viewBox="0 0 14.2 13.6"><rect x="0.6" y="0.6" width="13" height="12.4" fill="none" stroke="#c4c4c4" stroke-width="0.7"/><path d="M7.8 1.6 V5.6 H12.4 M2 6.4 H6.4 V11.6 M7.8 7 V11.6 M8.4 7 H12.4" fill="none" stroke="#d0d0d0" stroke-width="0.7"/></svg>
<span style="left:720.50px;top:56px;font-size:5.9px;height:8px;line-height:8px;color:#b4b4b4;letter-spacing:-0.126px;">Add-ins</span>
<span style="left:721.20px;top:74px;font-size:5.4px;height:8px;line-height:8px;color:#555;letter-spacing:-0.040px;">Add-ins</span>
<div style="left:744.1px;top:39.2px;width:0.8px;height:41.0px;background:#d2d2d2;"></div>
<svg style="left:771.2px;top:75.8px;" width="4.6" height="3.2" viewBox="0 0 4.6 3.2"><path d="M0.6 0.6 L2.3 2.4 L4 0.6" fill="none" stroke="#444" stroke-width="0.7"/></svg>
<div style="left:4px;top:80.2px;width:776.6px;height:2.6px;background:#fff;border-radius:0 0 3.5px 3.5px;"></div>
<div style="left:232.8px;top:85.2px;width:321.2px;height:6.3px;background:#fdfdfd;"></div>
<svg style="left:3.6px;top:86.6px;" width="3.4" height="3.4" viewBox="0 0 3.4 3.4"><path d="M0.5 0.2 V2.9 H3.2" fill="none" stroke="#444" stroke-width="0.8"/></svg>
<svg style="left:0;top:0" width="784" height="100" viewBox="0 0 784 100"><circle cx="189.64" cy="88.4" r="0.36" fill="#7c7c7c"/><circle cx="195.84" cy="88.4" r="0.36" fill="#7c7c7c"/><circle cx="202.03" cy="88.4" r="0.36" fill="#7c7c7c"/><path d="M208.22 86.8 V90" stroke="#777" stroke-width="0.5"/><circle cx="214.42" cy="88.4" r="0.36" fill="#7c7c7c"/><circle cx="220.61" cy="88.4" r="0.36" fill="#7c7c7c"/><circle cx="226.81" cy="88.4" r="0.36" fill="#7c7c7c"/><circle cx="239.19" cy="88.4" r="0.36" fill="#8a8a8a"/><circle cx="245.39" cy="88.4" r="0.36" fill="#8a8a8a"/><circle cx="251.58" cy="88.4" r="0.36" fill="#8a8a8a"/><path d="M257.77 86.8 V90" stroke="#808080" stroke-width="0.5"/><circle cx="263.97" cy="88.4" r="0.36" fill="#8a8a8a"/><circle cx="270.16" cy="88.4" r="0.36" fill="#8a8a8a"/><circle cx="276.36" cy="88.4" r="0.36" fill="#8a8a8a"/><circle cx="288.74" cy="88.4" r="0.36" fill="#8a8a8a"/><circle cx="294.94" cy="88.4" r="0.36" fill="#8a8a8a"/><circle cx="301.13" cy="88.4" r="0.36" fill="#8a8a8a"/><path d="M307.32 86.8 V90" stroke="#808080" stroke-width="0.5"/><circle cx="313.52" cy="88.4" r="0.36" fill="#8a8a8a"/><circle cx="319.71" cy="88.4" r="0.36" fill="#8a8a8a"/><circle cx="325.91" cy="88.4" r="0.36" fill="#8a8a8a"/><circle cx="338.29" cy="88.4" r="0.36" fill="#8a8a8a"/><circle cx="344.49" cy="88.4" r="0.36" fill="#8a8a8a"/><circle cx="350.68" cy="88.4" r="0.36" fill="#8a8a8a"/><path d="M356.88 86.8 V90" stroke="#808080" stroke-width="0.5"/><circle cx="363.07" cy="88.4" r="0.36" fill="#8a8a8a"/><circle cx="369.26" cy="88.4" r="0.36" fill="#8a8a8a"/><circle cx="375.46" cy="88.4" r="0.36" fill="#8a8a8a"/><circle cx="387.84" cy="88.4" r="0.36" fill="#8a8a8a"/><circle cx="394.04" cy="88.4" r="0.36" fill="#8a8a8a"/><circle cx="400.23" cy="88.4" r="0.36" fill="#8a8a8a"/><path d="M406.42 86.8 V90" stroke="#808080" stroke-width="0.5"/><circle cx="412.62" cy="88.4" r="0.36" fill="#8a8a8a"/><circle cx="418.81" cy="88.4" r="0.36" fill="#8a8a8a"/><circle cx="425.01" cy="88.4" r="0.36" fill="#8a8a8a"/><circle cx="437.39" cy="88.4" r="0.36" fill="#8a8a8a"/><circle cx="443.59" cy="88.4" r="0.36" fill="#8a8a8a"/><circle cx="449.78" cy="88.4" r="0.36" fill="#8a8a8a"/><path d="M455.98 86.8 V90" stroke="#808080" stroke-width="0.5"/><circle cx="462.17" cy="88.4" r="0.36" fill="#8a8a8a"/><circle cx="468.36" cy="88.4" r="0.36" fill="#8a8a8a"/><circle cx="474.56" cy="88.4" r="0.36" fill="#8a8a8a"/><circle cx="486.94" cy="88.4" r="0.36" fill="#8a8a8a"/><circle cx="493.14" cy="88.4" r="0.36" fill="#8a8a8a"/><circle cx="499.33" cy="88.4" r="0.36" fill="#8a8a8a"/><path d="M505.52 86.8 V90" stroke="#808080" stroke-width="0.5"/><circle cx="511.72" cy="88.4" r="0.36" fill="#8a8a8a"/><circle cx="517.91" cy="88.4" r="0.36" fill="#8a8a8a"/><circle cx="524.11" cy="88.4" r="0.36" fill="#8a8a8a"/><circle cx="536.49" cy="88.4" r="0.36" fill="#8a8a8a"/><circle cx="542.69" cy="88.4" r="0.36" fill="#8a8a8a"/><circle cx="548.88" cy="88.4" r="0.36" fill="#8a8a8a"/><path d="M555.08 86.8 V90" stroke="#808080" stroke-width="0.5"/><circle cx="561.27" cy="88.4" r="0.36" fill="#7c7c7c"/><circle cx="567.46" cy="88.4" r="0.36" fill="#7c7c7c"/><circle cx="573.66" cy="88.4" r="0.36" fill="#7c7c7c"/><path d="M579.85 86.8 V90" stroke="#777" stroke-width="0.5"/><circle cx="586.04" cy="88.4" r="0.36" fill="#7c7c7c"/><circle cx="592.24" cy="88.4" r="0.36" fill="#7c7c7c"/><circle cx="598.43" cy="88.4" r="0.36" fill="#7c7c7c"/><path d="M184.0 86.8 V90" stroke="#8a8a8a" stroke-width="0.5"/><path d="M242.6 84.6 H247.2 V86 L244.9 87.8 L242.6 86 Z" fill="#fdfdfd" stroke="#999" stroke-width="0.5"/><path d="M254.8 92.6 V88.6 L257.1 86.6 L259.4 88.6 V92.6 Z M254.8 90.4 H259.4" fill="#fdfdfd" stroke="#888" stroke-width="0.5"/><path d="M551.6 90.4 V88.6 L553.9 86.6 L556.2 88.6 V90.4 Z" fill="#fdfdfd" stroke="#888" stroke-width="0.5"/></svg>
<span style="left:281.35px;top:85px;font-size:4.4px;height:7px;line-height:7px;color:#666;letter-spacing:-0.053px;">1</span>
<span style="left:330.90px;top:85px;font-size:4.4px;height:7px;line-height:7px;color:#666;letter-spacing:-0.053px;">2</span>
<span style="left:380.45px;top:85px;font-size:4.4px;height:7px;line-height:7px;color:#666;letter-spacing:-0.053px;">3</span>
<span style="left:430.00px;top:85px;font-size:4.4px;height:7px;line-height:7px;color:#666;letter-spacing:-0.053px;">4</span>
<span style="left:479.55px;top:85px;font-size:4.4px;height:7px;line-height:7px;color:#666;letter-spacing:-0.053px;">5</span>
<span style="left:529.10px;top:85px;font-size:4.4px;height:7px;line-height:7px;color:#666;letter-spacing:-0.053px;">6</span>
<div style="left:777.8px;top:84.0px;width:6.4px;height:376.6px;background:#f4f4f4;"></div>
<div style="left:183.5px;top:103.0px;width:420.8px;height:357.6px;background:#ffffff;border-top:1px solid #cdcdcd;box-shadow:0 0 0 0.4px #e4e4e4;"></div>
<span style="left:372.00px;top:153px;font-size:8.1px;height:11px;line-height:11px;color:#222;letter-spacing:-0.203px;">Process Map</span>
<span style="left:261.80px;top:170px;font-size:8.1px;height:11px;line-height:11px;color:#222;letter-spacing:-0.054px;">Repatriation / Emergency Medical and Dietary Assistance Loan Application</span>
<span style="left:245.50px;top:204px;font-size:8.1px;height:11px;line-height:11px;color:#333;letter-spacing:-0.033px;">1.</span>
<svg style="left:230.4px;top:204.2px;" width="8.8" height="8.4" viewBox="0 0 8.8 8.4"><path d="M0.4 0.5 H7.4 V4 M0.4 0.5 V6.4 H3" fill="none" stroke="#c8c8c8" stroke-width="0.6"/><path d="M1.4 5 H3.4" stroke="#999" stroke-width="0.6"/><path d="M5 7.6 L5.6 5.6 L7.4 3.8 L8.2 4.6 L6.6 6.6 Z" fill="#e8862a"/></svg>
<div style="left:2.2px;top:153.0px;width:5.8px;height:307.6px;background:#fdfdfd;"></div>
<svg style="left:0;top:0" width="14" height="462" viewBox="0 0 14 462"><path d="M4.6 103.45 H6.8" stroke="#8a8a8a" stroke-width="0.7"/><circle cx="5.7" cy="109.64" r="0.33" fill="#a8a8a8"/><circle cx="5.7" cy="115.84" r="0.33" fill="#a8a8a8"/><circle cx="5.7" cy="122.03" r="0.33" fill="#a8a8a8"/><path d="M4.6 128.22 H6.6" stroke="#8a8a8a" stroke-width="0.5"/><circle cx="5.7" cy="134.42" r="0.33" fill="#a8a8a8"/><circle cx="5.7" cy="140.61" r="0.33" fill="#a8a8a8"/><circle cx="5.7" cy="146.81" r="0.33" fill="#a8a8a8"/><circle cx="5.7" cy="159.19" r="0.33" fill="#8a8a8a"/><circle cx="5.7" cy="165.39" r="0.33" fill="#8a8a8a"/><circle cx="5.7" cy="171.58" r="0.33" fill="#8a8a8a"/><path d="M4.6 177.78 H6.6" stroke="#777" stroke-width="0.5"/><circle cx="5.7" cy="183.97" r="0.33" fill="#8a8a8a"/><circle cx="5.7" cy="190.16" r="0.33" fill="#8a8a8a"/><circle cx="5.7" cy="196.36" r="0.33" fill="#8a8a8a"/><path d="M4.6 202.55 H6.8" stroke="#777" stroke-width="0.7"/><circle cx="5.7" cy="208.74" r="0.33" fill="#8a8a8a"/><circle cx="5.7" cy="214.94" r="0.33" fill="#8a8a8a"/><circle cx="5.7" cy="221.13" r="0.33" fill="#8a8a8a"/><path d="M4.6 227.32 H6.6" stroke="#777" stroke-width="0.5"/><circle cx="5.7" cy="233.52" r="0.33" fill="#8a8a8a"/><circle cx="5.7" cy="239.71" r="0.33" fill="#8a8a8a"/><circle cx="5.7" cy="245.91" r="0.33" fill="#8a8a8a"/><path d="M4.6 252.10 H6.8" stroke="#777" stroke-width="0.7"/><circle cx="5.7" cy="258.29" r="0.33" fill="#8a8a8a"/><circle cx="5.7" cy="264.49" r="0.33" fill="#8a8a8a"/><circle cx="5.7" cy="270.68" r="0.33" fill="#8a8a8a"/><path d="M4.6 276.88 H6.6" stroke="#777" stroke-width="0.5"/><circle cx="5.7" cy="283.07" r="0.33" fill="#8a8a8a"/><circle cx="5.7" cy="289.26" r="0.33" fill="#8a8a8a"/><circle cx="5.7" cy="295.46" r="0.33" fill="#8a8a8a"/><path d="M4.6 301.65 H6.8" stroke="#777" stroke-width="0.7"/><circle cx="5.7" cy="307.84" r="0.33" fill="#8a8a8a"/><circle cx="5.7" cy="314.04" r="0.33" fill="#8a8a8a"/><circle cx="5.7" cy="320.23" r="0.33" fill="#8a8a8a"/><path d="M4.6 326.42 H6.6" stroke="#777" stroke-width="0.5"/><circle cx="5.7" cy="332.62" r="0.33" fill="#8a8a8a"/><circle cx="5.7" cy="338.81" r="0.33" fill="#8a8a8a"/><circle cx="5.7" cy="345.01" r="0.33" fill="#8a8a8a"/><path d="M4.6 351.20 H6.8" stroke="#777" stroke-width="0.7"/><circle cx="5.7" cy="357.39" r="0.33" fill="#8a8a8a"/><circle cx="5.7" cy="363.59" r="0.33" fill="#8a8a8a"/><circle cx="5.7" cy="369.78" r="0.33" fill="#8a8a8a"/><path d="M4.6 375.98 H6.6" stroke="#777" stroke-width="0.5"/><circle cx="5.7" cy="382.17" r="0.33" fill="#8a8a8a"/><circle cx="5.7" cy="388.36" r="0.33" fill="#8a8a8a"/><circle cx="5.7" cy="394.56" r="0.33" fill="#8a8a8a"/><path d="M4.6 400.75 H6.8" stroke="#777" stroke-width="0.7"/><circle cx="5.7" cy="406.94" r="0.33" fill="#8a8a8a"/><circle cx="5.7" cy="413.14" r="0.33" fill="#8a8a8a"/><circle cx="5.7" cy="419.33" r="0.33" fill="#8a8a8a"/><path d="M4.6 425.52 H6.6" stroke="#777" stroke-width="0.5"/><circle cx="5.7" cy="431.72" r="0.33" fill="#8a8a8a"/><circle cx="5.7" cy="437.91" r="0.33" fill="#8a8a8a"/><circle cx="5.7" cy="444.11" r="0.33" fill="#8a8a8a"/><path d="M4.6 450.30 H6.8" stroke="#777" stroke-width="0.7"/><circle cx="5.7" cy="456.49" r="0.33" fill="#8a8a8a"/></svg>
<div style="left:0px;top:460.6px;width:784.2px;height:10.9px;background:#f3f3f3;"></div>
<div style="left:0px;top:470.4px;width:784.2px;height:0.6px;background:#dadada;"></div>
<span style="left:5.60px;top:463px;font-size:5.4px;height:8px;line-height:8px;color:#2e2e2e;letter-spacing:-0.107px;">Page 1 of 1</span>
<span style="left:41.60px;top:463px;font-size:5.4px;height:8px;line-height:8px;color:#2e2e2e;letter-spacing:0.027px;">11 words</span>
<svg style="left:72.0px;top:463.4px;" width="6.4" height="6" viewBox="0 0 6.4 6"><path d="M0.6 0.6 H5 V5 H0.6 Z M5 1.6 H5.8 V5.6 H1.6 V5" fill="none" stroke="#555" stroke-width="0.5"/></svg>
<span style="left:88.80px;top:463px;font-size:5.4px;height:8px;line-height:8px;color:#2e2e2e;letter-spacing:-0.093px;">Text Predictions: On</span>
<svg style="left:143.4px;top:463.2px;" width="6" height="6.4" viewBox="0 0 6 6.4"><circle cx="2.6" cy="1.1" r="0.8" fill="none" stroke="#444" stroke-width="0.5"/><path d="M0.4 2.4 H4.8 M2.6 2.4 V4.2 L1.4 6 M2.6 4.2 L3.8 6" fill="none" stroke="#444" stroke-width="0.5"/><path d="M4.2 3.2 C5.8 3.2 5.8 5.6 4.2 5.6" fill="none" stroke="#444" stroke-width="0.4"/></svg>
<span style="left:152.60px;top:463px;font-size:5.4px;height:8px;line-height:8px;color:#2e2e2e;letter-spacing:0.023px;">Accessibility: Good to go</span>
<svg style="left:617.2px;top:463.4px;" width="6.4" height="6.4" viewBox="0 0 6.4 6.4"><path d="M0.6 1.8 V0.6 H1.8 M4.6 0.6 H5.8 V1.8 M5.8 4.6 V5.8 H4.6 M1.8 5.8 H0.6 V4.6" fill="none" stroke="#444" stroke-width="0.5"/><rect x="1.8" y="1.4" width="2.8" height="3.6" fill="none" stroke="#444" stroke-width="0.5"/></svg>
<span style="left:625.00px;top:463px;font-size:5.4px;height:8px;line-height:8px;color:#2e2e2e;letter-spacing:-0.237px;">Focus</span>
<svg style="left:650.4px;top:463.4px;" width="6.4" height="5.8" viewBox="0 0 6.4 5.8"><rect x="0.4" y="0.4" width="5.6" height="5" fill="#555"/><path d="M3.2 0.4 V5.4" stroke="#ccc" stroke-width="0.4"/></svg>
<div style="left:663.0px;top:461.0px;width:19.0px;height:10.2px;background:#dcdcdc;"></div>
<svg style="left:669.4px;top:463.2px;" width="5.4" height="6.2" viewBox="0 0 5.4 6.2"><rect x="0.4" y="0.4" width="4.6" height="5.4" fill="#fff" stroke="#555" stroke-width="0.5"/><path d="M1.2 1.6 H4.2 M1.2 2.8 H4.2 M1.2 4 H4.2" stroke="#999" stroke-width="0.4"/></svg>
<svg style="left:688.0px;top:463.2px;" width="6.4" height="6.2" viewBox="0 0 6.4 6.2"><rect x="0.4" y="0.4" width="5" height="5.2" fill="none" stroke="#555" stroke-width="0.5"/><path d="M1.2 1.6 H4.4 M1.2 2.8 H4.4" stroke="#888" stroke-width="0.4"/><circle cx="4.8" cy="4.8" r="1.3" fill="#fff" stroke="#555" stroke-width="0.4"/></svg>
<div style="left:708.9px;top:466.0px;width:47.2px;height:0.6px;background:#666;"></div>
<div style="left:733.0px;top:463.8px;width:1.5px;height:5.0px;background:#444;"></div>
<span style="left:768.30px;top:463px;font-size:5.4px;height:8px;line-height:8px;color:#2e2e2e;letter-spacing:-0.073px;">110%</span>
<div style="left:788.2px;top:0px;width:780.8px;height:16.2px;background:#e9e9e9;"></div>
<div style="left:788.2px;top:16.2px;width:780.8px;height:18.0px;background:#f7f7f7;"></div>
<div style="left:788.2px;top:34.2px;width:780.8px;height:435.4px;background:linear-gradient(180deg,#e5ecf3 0px,#e4ebf2 26px,#e0e8f1 40px,#d9e4ef 50px,#cddbe9 58px,#c5d6e7 66px,#bed1e4 76px,#b1c9e1 110px,#a3bfdb 156px,#98b7d6 200px,#90b2d3 236px,#8eb0d2 436px);border-radius:0 0 2px 0;overflow:hidden;"><svg style="left:0;top:0" width="780.8" height="436" viewBox="788.2 34.2 780.8 436"><defs><linearGradient id="g1" gradientUnits="userSpaceOnUse" x1="0" y1="262" x2="0" y2="335"><stop offset="0" stop-color="#9dbbd9"/><stop offset="1" stop-color="#90b2d3"/></linearGradient><linearGradient id="g2" gradientUnits="userSpaceOnUse" x1="0" y1="322" x2="0" y2="400"><stop offset="0" stop-color="#a5c1dc"/><stop offset="1" stop-color="#9dbcd9"/></linearGradient><linearGradient id="g3" gradientUnits="userSpaceOnUse" x1="0" y1="380" x2="0" y2="470"><stop offset="0" stop-color="#abc6df"/><stop offset="1" stop-color="#a6c2dd"/></linearGradient><linearGradient id="h1" gradientUnits="userSpaceOnUse" x1="0" y1="270" x2="0" y2="360"><stop offset="0" stop-color="#9cbad8"/><stop offset="1" stop-color="#90b2d3"/></linearGradient><linearGradient id="h2" gradientUnits="userSpaceOnUse" x1="0" y1="320" x2="0" y2="390"><stop offset="0" stop-color="#a2bfdb"/><stop offset="1" stop-color="#a0bdda"/></linearGradient><linearGradient id="h3" gradientUnits="userSpaceOnUse" x1="0" y1="380" x2="0" y2="470"><stop offset="0" stop-color="#aac5de"/><stop offset="1" stop-color="#a6c2dd"/></linearGradient></defs><path d="M788 264.5 C810 261 850 260 900 276.5 V470 H788 Z" fill="url(#g1)"/><path d="M788 264.5 C810 261 850 260 900 276.5" fill="none" stroke="rgba(255,255,255,0.35)" stroke-width="0.7"/><path d="M788 341 C830 343 860 332 900 321.5 V470 H788 Z" fill="url(#g2)"/><path d="M788 341 C830 343 860 332 900 321.5" fill="none" stroke="rgba(255,255,255,0.40)" stroke-width="0.7"/><path d="M788 406 C820 390 860 380 900 378.5 V470 H788 Z" fill="url(#g3)"/><path d="M788 406 C820 390 860 380 900 378.5" fill="none" stroke="rgba(255,255,255,0.40)" stroke-width="0.7"/><path d="M1454 274 C1490 268 1530 272 1569 283 V470 H1454 Z" fill="url(#h1)"/><path d="M1454 319 C1500 333 1530 350 1569 365 V470 H1454 Z" fill="url(#h2)"/><path d="M1454 319 C1500 333 1530 350 1569 365" fill="none" stroke="rgba(255,255,255,0.18)" stroke-width="0.7"/><path d="M1454 382.5 C1490 391 1530 388 1569 378.5 V470 H1454 Z" fill="url(#h3)"/></svg></div>
<div style="left:787.7px;top:469.6px;width:781.3px;height:2.0px;background:#fbfbfb;"></div>
<svg style="left:793.4px;top:4.4px;" width="7" height="7.4" viewBox="0 0 7 7.4"><path d="M2.2 0.8 H5.8 V5.6 H2.2 Z M1 2 V6.6 H4.8" fill="none" stroke="#333" stroke-width="0.7"/></svg>
<svg style="left:813.2px;top:4.8px;" width="7" height="6.4" viewBox="0 0 7 6.4"><path d="M0.7 5.8 V0.9 H6.2 V5.8" fill="none" stroke="#222" stroke-width="0.9"/><path d="M0.7 1.2 H6.2" stroke="#222" stroke-width="1.4"/></svg>
<div style="left:829.5px;top:3.6px;width:0.6px;height:9.0px;background:#d2d2d2;"></div>
<svg style="left:832.2px;top:4.4px;" width="6.8" height="6.8" viewBox="0 0 6.8 6.8"><circle cx="3.4" cy="3.4" r="3" fill="#d9d9d9" stroke="#9a9a9a" stroke-width="0.4"/><circle cx="3.4" cy="3.4" r="1.3" fill="#8a8a8a"/></svg>
<span style="left:844.30px;top:4px;font-size:5.6px;height:8px;line-height:8px;color:#333;letter-spacing:-0.194px;">Passport Services - U.S. Embass</span>
<div style="left:913px;top:3px;width:9px;height:10px;background:linear-gradient(90deg,rgba(233,233,233,0),#e9e9e9);"></div>
<svg style="left:926.7px;top:5.9px;" width="4" height="4" viewBox="0 0 4 4"><path d="M0.5 0.5 L3.5 3.5 M3.5 0.5 L0.5 3.5" stroke="#333" stroke-width="0.65"/></svg>
<div style="left:935.4px;top:3.6px;width:0.6px;height:9.0px;background:#8a8a8a;"></div>
<svg style="left:939.2px;top:4.2px;" width="7.2" height="7.2" viewBox="0 0 7.2 7.2"><rect x="0.4" y="0.4" width="6.4" height="6.4" rx="0.7" fill="#8db6f7"/><path d="M0.4 5.6 H5.4 V6.8 H1.1 C0.7 6.8 0.4 6.5 0.4 6.1 Z" fill="#5bb974"/><path d="M5.4 5.6 H6.8 V6.1 C6.8 6.5 6.5 6.8 6.1 6.8 H5.4 Z" fill="#f2c94c"/><rect x="1.7" y="1.7" width="3.8" height="3.8" fill="#eef4fe"/><path d="M2.6 2.6 H3.4 V4.6 M4.2 2.6 V4.6" fill="none" stroke="#6f9fe8" stroke-width="0.5"/></svg>
<span style="left:950.40px;top:4px;font-size:5.6px;height:8px;line-height:8px;color:#333;letter-spacing:-0.082px;">U.S. Consulate General Melbou</span>
<div style="left:1019px;top:3px;width:9px;height:10px;background:linear-gradient(90deg,rgba(233,233,233,0),#e9e9e9);"></div>
<svg style="left:1032.6px;top:5.9px;" width="4" height="4" viewBox="0 0 4 4"><path d="M0.5 0.5 L3.5 3.5 M3.5 0.5 L0.5 3.5" stroke="#333" stroke-width="0.65"/></svg>
<svg style="left:1045.2px;top:4.2px;" width="7.2" height="7.2" viewBox="0 0 7.2 7.2"><rect x="0.4" y="0.4" width="6.4" height="6.4" rx="0.7" fill="#8db6f7"/><path d="M0.4 5.6 H5.4 V6.8 H1.1 C0.7 6.8 0.4 6.5 0.4 6.1 Z" fill="#5bb974"/><path d="M5.4 5.6 H6.8 V6.1 C6.8 6.5 6.5 6.8 6.1 6.8 H5.4 Z" fill="#f2c94c"/><rect x="1.7" y="1.7" width="3.8" height="3.8" fill="#eef4fe"/><path d="M2.6 2.6 H3.4 V4.6 M4.2 2.6 V4.6" fill="none" stroke="#6f9fe8" stroke-width="0.5"/></svg>
<span style="left:1056.80px;top:4px;font-size:5.6px;height:8px;line-height:8px;color:#333;letter-spacing:-0.027px;">U.S. Consulate General Melbou</span>
<div style="left:1127px;top:3px;width:9px;height:10px;background:linear-gradient(90deg,rgba(233,233,233,0),#e9e9e9);"></div>
<svg style="left:1139.2px;top:5.9px;" width="4" height="4" viewBox="0 0 4 4"><path d="M0.5 0.5 L3.5 3.5 M3.5 0.5 L0.5 3.5" stroke="#333" stroke-width="0.65"/></svg>
<div style="left:1148.4px;top:3.6px;width:0.6px;height:9.0px;background:#8a8a8a;"></div>
<svg style="left:1151.6px;top:4.2px;" width="7.2" height="7.2" viewBox="0 0 7.2 7.2"><rect x="0.4" y="0.4" width="6.4" height="6.4" rx="0.7" fill="#8db6f7"/><path d="M0.4 5.6 H5.4 V6.8 H1.1 C0.7 6.8 0.4 6.5 0.4 6.1 Z" fill="#5bb974"/><path d="M5.4 5.6 H6.8 V6.1 C6.8 6.5 6.5 6.8 6.1 6.8 H5.4 Z" fill="#f2c94c"/><rect x="1.7" y="1.7" width="3.8" height="3.8" fill="#eef4fe"/><path d="M2.6 2.6 H3.4 V4.6 M4.2 2.6 V4.6" fill="none" stroke="#6f9fe8" stroke-width="0.5"/></svg>
<span style="left:1164.00px;top:4px;font-size:5.6px;height:8px;line-height:8px;color:#333;letter-spacing:0.028px;">U.S. Consulate General Melbou</span>
<div style="left:1236px;top:3px;width:9px;height:10px;background:linear-gradient(90deg,rgba(233,233,233,0),#e9e9e9);"></div>
<svg style="left:1246.4px;top:5.9px;" width="4" height="4" viewBox="0 0 4 4"><path d="M0.5 0.5 L3.5 3.5 M3.5 0.5 L0.5 3.5" stroke="#333" stroke-width="0.65"/></svg>
<svg style="left:1257.8px;top:4.2px;" width="7.2" height="7.2" viewBox="0 0 7.2 7.2"><rect x="0.4" y="0.4" width="6.4" height="6.4" rx="0.7" fill="#3f7fe8"/><path d="M0.4 5.4 H5.2 V6.8 H1.1 C0.7 6.8 0.4 6.5 0.4 6.1 Z" fill="#2fa35a"/><path d="M5.2 0.4 H6.1 C6.5 0.4 6.8 0.7 6.8 1.1 V5.4 H5.2 Z" fill="#f5c023"/><rect x="1.7" y="1.7" width="3.6" height="3.6" fill="#fff"/><path d="M2.5 2.5 H3.3 V4.5 M4.2 2.5 V4.5" fill="none" stroke="#3f7fe8" stroke-width="0.5"/></svg>
<span style="left:1269.70px;top:4px;font-size:5.6px;height:8px;line-height:8px;color:#333;letter-spacing:-0.024px;">U.S. Consulate General Melbou</span>
<div style="left:1340px;top:3px;width:9px;height:10px;background:linear-gradient(90deg,rgba(233,233,233,0),#e9e9e9);"></div>
<svg style="left:1353.0px;top:5.9px;" width="4" height="4" viewBox="0 0 4 4"><path d="M0.5 0.5 L3.5 3.5 M3.5 0.5 L0.5 3.5" stroke="#333" stroke-width="0.65"/></svg>
<div style="left:1362.0px;top:1.2px;width:105.8px;height:15.2px;background:#f7f7f7;border-radius:2.5px 2.5px 0 0;"></div>
<svg style="left:1364.4px;top:4.0px;" width="8" height="8" viewBox="0 0 8 8"><rect x="2.2" y="0.6" width="5.4" height="6.8" rx="0.8" fill="#1a9ba1"/><rect x="0.2" y="2" width="4.8" height="4.8" rx="0.6" fill="#036c70"/><path d="M3.6 3.2 H1.8 V5.8 M1.8 4.4 H3.2" fill="none" stroke="#fff" stroke-width="0.6"/></svg>
<span style="left:1376.60px;top:4px;font-size:5.6px;height:8px;line-height:8px;color:#222;letter-spacing:-0.014px;">Repatriation / Emergency Medi</span>
<div style="left:1446px;top:3px;width:8px;height:10px;background:linear-gradient(90deg,rgba(247,247,247,0),#f7f7f7);"></div>
<svg style="left:1458.8px;top:5.9px;" width="4" height="4" viewBox="0 0 4 4"><path d="M0.5 0.5 L3.5 3.5 M3.5 0.5 L0.5 3.5" stroke="#333" stroke-width="0.65"/></svg>
<svg style="left:1475.0px;top:4.8px;" width="6.8" height="6.8" viewBox="0 0 6.8 6.8"><path d="M3.4 0.4 V6.4 M0.4 3.4 H6.4" stroke="#333" stroke-width="0.55"/></svg>
<svg style="left:1512.4px;top:7.4px;" width="5" height="2" viewBox="0 0 5 2"><path d="M0.4 1 H4.6" stroke="#a8a8a8" stroke-width="0.6"/></svg>
<svg style="left:1533.6px;top:5.4px;" width="5.4" height="5.4" viewBox="0 0 5.4 5.4"><path d="M0.6 1.8 V4.8 H3.8 V1.8 Z M1.8 0.6 H4.8 V3.6" fill="none" stroke="#c0c0c0" stroke-width="0.5"/></svg>
<svg style="left:1555.4px;top:5.4px;" width="5.4" height="5.4" viewBox="0 0 5.4 5.4"><path d="M0.6 0.6 L4.8 4.8 M4.8 0.6 L0.6 4.8" stroke="#b0b0b0" stroke-width="0.6"/></svg>
<svg style="left:792.8px;top:21.6px;" width="5.6" height="7.2" viewBox="0 0 5.6 7.2"><path d="M4.6 0.6 L1.2 3.6 L4.6 6.6" fill="none" stroke="#c4c4c4" stroke-width="0.7"/></svg>
<svg style="left:813.8px;top:21.2px;" width="8.4" height="8.4" viewBox="0 0 8.4 8.4"><path d="M7 4.2 A3 3 0 1 1 5.6 1.7" fill="none" stroke="#222" stroke-width="0.8"/><path d="M4.6 0.4 H6.6 V2.6" fill="none" stroke="#222" stroke-width="0.8"/></svg>
<svg style="left:834.6px;top:21.2px;" width="8.4" height="8.2" viewBox="0 0 8.4 8.2"><path d="M0.8 4 L4.2 0.9 L7.6 4 V7.4 H5.2 V5 H3.2 V7.4 H0.8 Z" fill="none" stroke="#222" stroke-width="0.8"/></svg>
<div style="left:852.0px;top:17.9px;width:608.0px;height:14.6px;background:#ffffff;border-radius:7.3px;box-shadow:0 0 0 0.5px #e1e1e1;"></div>
<svg style="left:860.6px;top:21.8px;" width="6.4" height="7.2" viewBox="0 0 6.4 7.2"><rect x="0.8" y="2.6" width="4.8" height="4" rx="0.7" fill="none" stroke="#333" stroke-width="0.6"/><path d="M1.9 2.6 V1.8 C1.9 0.4 4.5 0.4 4.5 1.8 V2.6" fill="none" stroke="#333" stroke-width="0.6"/></svg>
<span style="left:875.00px;top:21px;font-size:6.4px;height:9px;line-height:9px;color:#555;letter-spacing:0.152px;">https://</span>
<span style="left:895.40px;top:21px;font-size:6.4px;height:9px;line-height:9px;color:#111;letter-spacing:0.090px;text-shadow:0 0 0.15px #111;">forms.office.com</span>
<span style="left:943.60px;top:21px;font-size:6.4px;height:9px;line-height:9px;color:#6a6a6a;letter-spacing:-0.070px;">/Pages/DesignPageV2.aspx?subpage=design&amp;token=ace2f0a303bf4364bb5b2eee51d7e9a5&amp;id=dHOPZvSa0UimkaLrfGH0S_vKCLuf_kRKkT5SOwNg8UL...</span>
<svg style="left:1389.4px;top:21.8px;" width="6.8" height="6.8" viewBox="0 0 6.8 6.8"><rect x="0.6" y="0.6" width="5.6" height="5.6" fill="none" stroke="#777" stroke-width="0.55"/><path d="M3.4 0.6 V6.2 M0.6 3.4 H6.2" stroke="#777" stroke-width="0.5"/></svg>
<svg style="left:1406.8px;top:21.8px;" width="7.6" height="6.8" viewBox="0 0 7.6 6.8"><path d="M0.6 3.4 C2 1.2 5.6 1.2 7 3.4 C5.6 5.6 2 5.6 0.6 3.4 Z" fill="none" stroke="#444" stroke-width="0.6"/><circle cx="3.8" cy="3.4" r="1" fill="#444"/><path d="M1 0.6 L6.6 6.2" stroke="#444" stroke-width="0.7"/></svg>
<span style="left:1426.40px;top:21px;font-size:6.2px;height:9px;line-height:9px;color:#666;letter-spacing:0.059px;">A</span>
<span style="left:1430.40px;top:20px;font-size:4.2px;height:7px;line-height:7px;color:#666;letter-spacing:0.594px;">”</span>
<svg style="left:1444.8px;top:21.4px;" width="7.6" height="7.4" viewBox="0 0 7.6 7.4"><path d="M3.8 0.7 L4.8 2.8 L7 3.1 L5.4 4.7 L5.8 6.9 L3.8 5.8 L1.8 6.9 L2.2 4.7 L0.6 3.1 L2.8 2.8 Z" fill="none" stroke="#666" stroke-width="0.55"/></svg>
<svg style="left:1469.6px;top:21.2px;" width="8" height="8" viewBox="0 0 8 8"><path d="M1 3 H2.6 C2 1.2 4.6 1.2 4 3 H6 V4.6 C7.6 4 7.6 6.6 6 6 V7.4 H1 Z" fill="none" stroke="#222" stroke-width="0.75"/></svg>
<div style="left:1484.6px;top:20.6px;width:0.6px;height:9.2px;background:#d8d8d8;"></div>
<svg style="left:1492.4px;top:21.2px;" width="8" height="8" viewBox="0 0 8 8"><path d="M3.2 0.8 L4 2.6 L6 2.8 L4.6 4.2 L5 6.2 L3.2 5.2 L1.4 6.2 L1.8 4.2 L0.4 2.8 L2.4 2.6 Z" fill="none" stroke="#222" stroke-width="0.65"/><path d="M5.6 3.6 H7.8 M5.8 5 H7.8 M6 6.4 H7.8" stroke="#222" stroke-width="0.6"/></svg>
<div style="left:1511.7px;top:19.0px;width:12.0px;height:12.0px;background:#a8a8a8;border-radius:50%;"></div>
<svg style="left:1535.6px;top:24.2px;" width="7" height="2" viewBox="0 0 7 2"><circle cx="1" cy="1" r="0.6" fill="#222"/><circle cx="3.5" cy="1" r="0.6" fill="#222"/><circle cx="6" cy="1" r="0.6" fill="#222"/></svg>
<svg style="left:1554.8px;top:21.8px;" width="7.6" height="6.6" viewBox="0 0 7.6 6.6"><rect x="0.5" y="0.5" width="6.6" height="5.6" rx="0.8" fill="#fff" stroke="#111" stroke-width="0.8"/><rect x="3.8" y="1.4" width="2.6" height="3.8" fill="#111"/></svg>
<svg style="left:793.5px;top:41.9px;" width="7.2" height="7.2" viewBox="0 0 7.2 7.2"><circle cx="1.0" cy="1.0" r="0.66" fill="#1e1e1e"/><circle cx="1.0" cy="3.6" r="0.66" fill="#1e1e1e"/><circle cx="1.0" cy="6.2" r="0.66" fill="#1e1e1e"/><circle cx="3.6" cy="1.0" r="0.66" fill="#1e1e1e"/><circle cx="3.6" cy="3.6" r="0.66" fill="#1e1e1e"/><circle cx="3.6" cy="6.2" r="0.66" fill="#1e1e1e"/><circle cx="6.2" cy="1.0" r="0.66" fill="#1e1e1e"/><circle cx="6.2" cy="3.6" r="0.66" fill="#1e1e1e"/><circle cx="6.2" cy="6.2" r="0.66" fill="#1e1e1e"/></svg>
<span style="left:812.70px;top:41px;font-size:7.2px;height:11px;line-height:11px;color:#2a2a2a;letter-spacing:-0.015px;text-shadow:0 0 0.1px #2a2a2a;">Forms</span>
<span style="left:1054.70px;top:41px;font-size:6.4px;height:9px;line-height:9px;color:#222;letter-spacing:0.027px;">Repatriation / Emergency Medical and Dietary Assistance Loan Application</span>
<span style="left:1272.80px;top:42px;font-size:6.0px;height:8px;line-height:8px;color:#333;">-</span>
<span style="left:1279.00px;top:42px;font-size:6.0px;height:8px;line-height:8px;color:#333;letter-spacing:-0.403px;">Saved</span>
<svg style="left:1298.6px;top:44.6px;" width="5.6" height="3.6" viewBox="0 0 5.6 3.6"><path d="M0.6 0.6 L2.8 2.8 L5 0.6" fill="none" stroke="#444" stroke-width="0.6"/></svg>
<span style="left:1531.00px;top:41px;font-size:7.8px;height:11px;line-height:11px;color:#4a4a4a;letter-spacing:0.256px;">?</span>
<div style="left:1548.4px;top:38.4px;width:15.4px;height:15.4px;background:#a8a8a8;border-radius:50%;"></div>
<div style="left:1199.8px;top:61.8px;width:11.6px;height:11.6px;background:#e9e7e6;border-radius:50%;"></div>
<span style="left:1201.40px;top:64px;font-size:5.6px;height:8px;line-height:8px;color:#6e6e6e;letter-spacing:0.309px;">NP</span>
<svg style="left:1220.8px;top:63.6px;" width="8.2" height="8" viewBox="0 0 8.2 8"><path d="M4 0.8 C1.6 0.8 0.6 2.6 0.6 4 C0.6 6 2.2 7.2 3.6 7.2 C4.6 7.2 4.2 6 4.6 5.6 C5.2 5 7.4 5.8 7.4 3.8 C7.4 2 5.8 0.8 4 0.8 Z" fill="none" stroke="#333" stroke-width="0.65"/><circle cx="2.6" cy="3.2" r="0.5" fill="#333"/><circle cx="4.4" cy="2.4" r="0.5" fill="#333"/></svg>
<span style="left:1232.80px;top:63px;font-size:6.4px;height:9px;line-height:9px;color:#222;letter-spacing:-0.144px;text-shadow:0 0 0.25px #222;">Style</span>
<svg style="left:1258.4px;top:63.6px;" width="7.8" height="8" viewBox="0 0 7.8 8"><circle cx="3.9" cy="4" r="1.3" fill="none" stroke="#333" stroke-width="0.6"/><path d="M3.9 0.8 L5.2 1.4 L6.4 1.2 L7 2.6 L6.6 3.6 L7 5 L6.4 6.6 L5.2 6.6 L3.9 7.2 L2.6 6.6 L1.4 6.6 L0.8 5 L1.2 3.8 L0.8 2.6 L1.4 1.2 L2.6 1.4 Z" fill="none" stroke="#333" stroke-width="0.6"/></svg>
<span style="left:1270.00px;top:63px;font-size:6.4px;height:9px;line-height:9px;color:#222;letter-spacing:0.113px;text-shadow:0 0 0.25px #222;">Settings</span>
<svg style="left:1305.8px;top:64.4px;" width="8.8" height="6.4" viewBox="0 0 8.8 6.4"><path d="M0.6 3.4 C2.2 0.8 6.6 0.8 8.2 3.4" fill="none" stroke="#333" stroke-width="0.65"/><circle cx="4.4" cy="3.8" r="1.5" fill="none" stroke="#333" stroke-width="0.65"/></svg>
<span style="left:1317.60px;top:63px;font-size:6.4px;height:9px;line-height:9px;color:#222;letter-spacing:0.024px;text-shadow:0 0 0.25px #222;">Preview</span>
<div style="left:1352.0px;top:60.2px;width:75.0px;height:14.4px;background:linear-gradient(90deg,#2b6ba8,#245f9c 50%,#1e4f86);border-radius:7.2px;"></div>
<svg style="left:1358.4px;top:63.6px;" width="8" height="7.6" viewBox="0 0 8 7.6"><path d="M0.8 0.8 L7 3.8 L0.8 6.8 L2 3.8 Z M2 3.8 H4.6" fill="none" stroke="#fff" stroke-width="0.65"/></svg>
<span style="left:1369.70px;top:63px;font-size:6.6px;height:9px;line-height:9px;color:#ffffff;font-weight:700;letter-spacing:-0.301px;">Collect responses</span>
<div style="left:1432.2px;top:60.2px;width:70.0px;height:14.4px;background:#ffffff;border:0.7px solid #3d74ad;border-radius:7.2px;"></div>
<svg style="left:1441.4px;top:63.8px;" width="6.4" height="7.4" viewBox="0 0 6.4 7.4"><path d="M1.8 0.6 H4.4 L5.8 2 V5.6 H1.8 Z M0.6 2 V6.8 H4.4" fill="none" stroke="#3d74ad" stroke-width="0.55"/></svg>
<span style="left:1450.40px;top:63px;font-size:6.6px;height:9px;line-height:9px;color:#1f5c99;letter-spacing:-0.046px;text-shadow:0 0 0.3px #1f5c99;">View responses</span>
<div style="left:1490.0px;top:56.6px;width:9.0px;height:7.2px;background:#1f66b0;border-radius:3.6px;"></div>
<span style="left:1491.60px;top:56px;font-size:5.4px;height:8px;line-height:8px;color:#ffffff;letter-spacing:-0.100px;">15</span>
<svg style="left:1509.6px;top:63.8px;" width="7.4" height="7.4" viewBox="0 0 7.4 7.4"><rect x="0.6" y="0.8" width="6.2" height="4.2" fill="none" stroke="#222" stroke-width="0.7"/><path d="M3.7 5 V6.6 M2 6.8 H5.4" stroke="#222" stroke-width="0.7"/></svg>
<span style="left:1520.00px;top:63px;font-size:6.4px;height:9px;line-height:9px;color:#222;letter-spacing:-0.004px;text-shadow:0 0 0.25px #222;">Present</span>
<svg style="left:1553.8px;top:65.4px;" width="7" height="2.4" viewBox="0 0 7 2.4"><circle cx="1" cy="1.2" r="0.7" fill="#1a1a1a"/><circle cx="3.5" cy="1.2" r="0.7" fill="#1a1a1a"/><circle cx="6" cy="1.2" r="0.7" fill="#1a1a1a"/></svg>
<div style="left:1565.6px;top:34.2px;width:3.4px;height:435.4px;background:#eef2f6;"></div>
<div style="left:1566.4px;top:82.0px;width:1.6px;height:16.0px;background:#858a91;border-radius:0.8px;"></div>
<div style="left:808.6px;top:144.6px;width:30.6px;height:45.6px;background:#dfe9f2;border-radius:15.3px;"></div>
<svg style="left:819.6px;top:160.6px;" width="8.2" height="8.2" viewBox="0 0 8.2 8.2"><rect x="0.6" y="0.6" width="7" height="7" rx="1.1" fill="none" stroke="#2a2a2a" stroke-width="0.75"/><path d="M3.4 0.6 V7.6 M3.4 4.1 H7.6" stroke="#2a2a2a" stroke-width="0.65"/></svg>
<span style="left:813.40px;top:169px;font-size:4.9px;height:7px;line-height:7px;color:#1c1c1c;letter-spacing:-0.189px;">Templates</span>
<div style="left:899.2px;top:82.0px;width:555.8px;height:387.6px;background:#ffffff;border-radius:6px 6px 0 0;"></div>
<svg style="left:931.3px;top:109.7px;" width="29.8" height="29.8" viewBox="0 0 29.8 29.8"><circle cx="15" cy="15" r="14.4" fill="#fefefe" stroke="#7f8da3" stroke-width="0.55"/><circle cx="15" cy="15" r="12.4" fill="none" stroke="#aeb6c3" stroke-width="1.0" stroke-dasharray="0.6 0.75"/><circle cx="15" cy="15" r="10.7" fill="none" stroke="#cdd3dc" stroke-width="0.35"/><circle cx="15" cy="8.7" r="2.3" fill="#a7d0f2"/><circle cx="15" cy="8.7" r="1.1" fill="#d6ebfb"/><path d="M14.2 13.8 C12.4 11.2 9.8 10 7.4 10.4 C7.4 13.4 8.8 16.8 12.8 18.2 Z" fill="#6d4726"/><path d="M15.8 13.8 C17.6 11.2 20.2 10 22.6 10.4 C22.6 13.4 21.2 16.8 17.2 18.2 Z" fill="#6d4726"/><path d="M9 11.6 L12.6 15.6 M8.6 13.4 L12.2 16.8 M21 11.6 L17.4 15.6 M21.4 13.4 L17.8 16.8" stroke="#c9a24a" stroke-width="0.35"/><ellipse cx="15" cy="16.6" rx="2.3" ry="3.8" fill="#6d4726"/><circle cx="15" cy="11.9" r="1.35" fill="#f3f0e8"/><path d="M13.3 14.3 H16.7 V17.8 C16.7 19 15.6 19.7 15 20 C14.4 19.7 13.3 19 13.3 17.8 Z" fill="#c9353c"/><path d="M13.3 14.3 H16.7 V15.7 H13.3 Z" fill="#2d4a94"/><path d="M14.15 15.7 V19.4 M15 15.7 V20 M15.85 15.7 V19.4" stroke="#fff" stroke-width="0.38"/><path d="M13.4 20 L15 23 L16.6 20 Z" fill="#d9d5c8"/><path d="M12.6 19.2 C10.6 19.4 9 20.2 7.6 21.8" fill="none" stroke="#2c8a45" stroke-width="1.5"/><path d="M7.2 18.6 L9.4 20.6" stroke="#2c8a45" stroke-width="1.2"/><path d="M17.4 19.4 L22.4 21.6 M17.8 18.6 L22.6 20.2" stroke="#9b9b9b" stroke-width="0.8"/><path d="M10.2 24.6 C13 26.4 17 26.4 19.8 24.6" fill="none" stroke="#8c96a6" stroke-width="0.9" stroke-dasharray="0.7 0.5"/></svg>
<span style="left:967.00px;top:111px;font-size:13.1px;height:17px;line-height:17px;color:#4a5562;letter-spacing:0.121px;-webkit-text-stroke:0.3px #4a5562;">Repatriation / Emergency Medical and Dietary Assistance Loan Application</span>
<svg style="left:1413.4px;top:116.4px;" width="10" height="10" viewBox="0 0 10 10"><circle cx="2.2" cy="2" r="1.3" fill="none" stroke="#2a5f9e" stroke-width="0.8"/><circle cx="2.2" cy="8" r="1.3" fill="none" stroke="#2a5f9e" stroke-width="0.8"/><circle cx="8" cy="5.6" r="1.3" fill="none" stroke="#2a5f9e" stroke-width="0.8"/><path d="M2.2 3.3 V6.7 M2.2 5.6 H6.7" fill="none" stroke="#2a5f9e" stroke-width="0.8"/></svg>
<span style="left:931.00px;top:149px;font-size:6.5px;height:9px;line-height:9px;color:#5a5a5a;letter-spacing:0.037px;">Please fill out the following form to complete your application for a Repatriation / Emergency Medical and Dietary Assistance Loan. Additional information about this form:</span>
<span style="left:931.00px;top:167px;font-size:6.5px;height:9px;line-height:9px;color:#5a5a5a;letter-spacing:-0.002px;">This form is composed of questions from the DS-3072 (OMB approval number 1405-0150):</span>
<span style="left:1194.50px;top:167px;font-size:6.5px;height:9px;line-height:9px;color:#1a1ad6;letter-spacing:-0.010px;text-decoration:underline;">https://eforms.state.gov/Forms/ds3072.PDF</span>
<span style="left:931.00px;top:177px;font-size:6.5px;height:9px;line-height:9px;color:#5a5a5a;letter-spacing:-0.021px;">Please ensure that you review the Promissory Note and Repayment Agreement and the Privacy Act and Paperwork Reduction Act Statement located on the DS-3072.</span>
<div style="left:899.2px;top:195.0px;width:555.8px;height:18.6px;background:#f3f3f3;"></div>
<span style="left:912.70px;top:200px;font-size:6.5px;height:9px;line-height:9px;color:#555;letter-spacing:-0.198px;">Section</span>
<span style="left:935.20px;top:200px;font-size:6.5px;height:9px;line-height:9px;color:#2b6cb0;letter-spacing:-0.425px;">1</span>
<svg style="left:1436.4px;top:203.4px;" width="6.4" height="2" viewBox="0 0 6.4 2"><circle cx="1" cy="1" r="0.5" fill="#444"/><circle cx="3.2" cy="1" r="0.5" fill="#444"/><circle cx="5.4" cy="1" r="0.5" fill="#444"/></svg>
<span style="left:930.00px;top:236px;font-size:10.2px;height:13px;line-height:13px;color:#1e1e1e;font-weight:700;letter-spacing:0.021px;">Part 1 - Adult Applicant</span>
<span style="left:930.00px;top:254px;font-size:6.3px;height:9px;line-height:9px;color:#222;letter-spacing:0.003px;">Application to be completed by each adult applicant regardless of nationality.</span>
<span style="left:930.20px;top:294px;font-size:8.5px;height:12px;line-height:12px;color:#2a2a2a;letter-spacing:-0.414px;">1. Last Name</span>
<span style="left:978.00px;top:295px;font-size:6.6px;height:9px;line-height:9px;color:#c4314b;letter-spacing:0.422px;">*</span>
<div style="left:939.2px;top:314.0px;width:484.0px;height:18.7px;background:#f5f5f5;border-radius:1.5px;"></div>
<span style="left:944.50px;top:319px;font-size:6.2px;height:9px;line-height:9px;color:#666;letter-spacing:-0.025px;">Enter your answer</span>
<span style="left:930.20px;top:360px;font-size:8.5px;height:12px;line-height:12px;color:#2a2a2a;letter-spacing:-0.370px;">2. First Name</span>
<span style="left:978.60px;top:361px;font-size:6.6px;height:9px;line-height:9px;color:#c4314b;letter-spacing:0.422px;">*</span>
<div style="left:939.2px;top:380.2px;width:484.0px;height:18.7px;background:#f5f5f5;border-radius:1.5px;"></div>
<span style="left:944.50px;top:385px;font-size:6.2px;height:9px;line-height:9px;color:#666;letter-spacing:-0.025px;">Enter your answer</span>
<span style="left:930.20px;top:426px;font-size:8.5px;height:12px;line-height:12px;color:#2a2a2a;letter-spacing:-0.224px;">3. Middle Name</span>
<div style="left:939.2px;top:446.6px;width:484.0px;height:18.7px;background:#f5f5f5;border-radius:1.5px;"></div>
<span style="left:944.50px;top:452px;font-size:6.2px;height:9px;line-height:9px;color:#666;letter-spacing:-0.025px;">Enter your answer</span>
<div style="left:0px;top:471.0px;width:782.0px;height:19.0px;background:linear-gradient(90deg,#20363f 0%,#1f343f 40%,#1c2a40 75%,#1b2442 100%);"></div>
<div style="left:782.0px;top:471.0px;width:1.0px;height:19.0px;background:#5a667a;"></div>
<div style="left:783.0px;top:471.0px;width:786.0px;height:19.0px;background:linear-gradient(90deg,#1f353d 0%,#1f333f 42%,#1d2b42 72%,#1a2340 100%);"></div>
<svg style="left:7.0px;top:476.8px;" width="8.2" height="8.2" viewBox="0 0 8.2 8.2"><path d="M0 0.98 L3.77 0.33 V3.77 H0 Z M4.43 0.25 L8.2 0 V3.77 H4.43 Z M0 4.43 H3.77 V7.87 L0 7.22 Z M4.43 4.43 H8.2 V8.2 L4.43 7.95 Z" fill="#fff"/></svg>
<div style="left:22.4px;top:471.0px;width:160.8px;height:19.0px;background:#f1f1f1;"></div>
<svg style="left:28.0px;top:476.4px;" width="8" height="8.6" viewBox="0 0 8 8.6"><circle cx="4.9" cy="3.2" r="2.5" fill="none" stroke="#333" stroke-width="0.8"/><path d="M3.1 5 L0.6 7.9" stroke="#333" stroke-width="0.9"/></svg>
<span style="left:41.00px;top:476px;font-size:7.2px;height:11px;line-height:11px;color:#3c3c3c;letter-spacing:-0.196px;">Type here to search</span>
<svg style="left:190.0px;top:477.2px;" width="8.4" height="7.4" viewBox="0 0 8.4 7.4"><rect x="0.4" y="1.4" width="4.6" height="4.6" fill="none" stroke="#e8e8e8" stroke-width="0.6"/><path d="M6.2 0.6 V6.8 M7.6 1.4 V2.4 M7.6 5 V6" stroke="#e8e8e8" stroke-width="0.7"/><path d="M0.4 0.4 H1.6 M0.4 7 H1.6" stroke="#e8e8e8" stroke-width="0.5"/></svg>
<svg style="left:209.8px;top:475.6px;" width="11" height="11" viewBox="0 0 11 11"><circle cx="5.5" cy="5.5" r="5.2" fill="#1b9de2"/><path d="M0.6 6.4 C0.6 2.4 4 0.4 6.4 0.4 C9.4 0.4 10.8 3 10.6 5 H4.6 C4.6 8 7.6 9.4 10 8.2 C8.8 10.2 6.6 10.8 5 10.6 C2.6 10.2 0.6 8.6 0.6 6.4 Z" fill="#1565c0"/><path d="M1.2 4.2 C2.4 1.6 5.6 0.6 8 1.4 C5.4 1.6 3.6 3 3.2 5.4 Z" fill="#4fd08a"/></svg>
<span style="left:223.00px;top:476px;font-size:6.2px;height:9px;line-height:9px;color:#f2f2f2;letter-spacing:-0.616px;">Ro...</span>
<div style="left:208.6px;top:488.6px;width:26.900000000000006px;height:1.4px;background:#8db7de;"></div>
<svg style="left:242.8px;top:476.2px;" width="7.0" height="10" viewBox="0 0 7 10"><path d="M0.4 0.6 H4 L6.4 2 V9.4 H2.8 L0.4 8.4 Z" fill="#f7d36b"/><path d="M4 0.6 L6.4 2 V9.4 L4 8.4 Z" fill="#e8b339"/></svg>
<span style="left:254.50px;top:476px;font-size:6.2px;height:9px;line-height:9px;color:#f2f2f2;letter-spacing:-0.401px;">Te...</span>
<div style="left:239.8px;top:488.6px;width:26.80000000000001px;height:1.4px;background:#8db7de;"></div>
<svg style="left:272.3px;top:475.8px;" width="11" height="11" viewBox="0 0 11 11"><circle cx="5.5" cy="5.5" r="5.2" fill="#e8453c"/><path d="M5.5 5.5 L1 8.1 A5.2 5.2 0 0 1 1 2.9 Z" fill="#e8453c"/><path d="M5.5 5.5 L1 2.9 A5.2 5.2 0 0 0 3 10.1 Z" fill="#2da94f"/><path d="M0.9 3.2 L5.5 5.5 L3.2 10.2 A5.2 5.2 0 0 1 0.9 3.2 Z" fill="#2da94f"/><path d="M5.5 5.5 H10.7 A5.2 5.2 0 0 1 3.2 10.2 Z" fill="#fdd23e"/><circle cx="5.5" cy="5.5" r="2.4" fill="#fff"/><circle cx="5.5" cy="5.5" r="1.8" fill="#3f82ec"/></svg>
<span style="left:285.70px;top:476px;font-size:6.2px;height:9px;line-height:9px;color:#f2f2f2;letter-spacing:-0.371px;">My...</span>
<div style="left:270.8px;top:488.6px;width:27.19999999999999px;height:1.4px;background:#8db7de;"></div>
<svg style="left:303.4px;top:476.2px;" width="11" height="9.9" viewBox="0 0 11 10"><rect x="3.6" y="0.6" width="7" height="8.6" rx="0.8" fill="#1f8be0"/><rect x="3.6" y="5" width="7" height="4.2" fill="#0f5fb5"/><rect x="0.4" y="2" width="6" height="6" rx="0.7" fill="#0b58b0"/><circle cx="3.4" cy="5" r="1.6" fill="none" stroke="#fff" stroke-width="0.8"/></svg>
<span style="left:316.70px;top:476px;font-size:6.2px;height:9px;line-height:9px;color:#f2f2f2;letter-spacing:-0.424px;">Ou...</span>
<div style="left:303.0px;top:488.6px;width:26.600000000000023px;height:1.4px;background:#8db7de;"></div>
<div style="left:332.0px;top:471.0px;width:30.8px;height:19.0px;background:#ad713c;"></div>
<svg style="left:335.0px;top:476.0px;" width="11" height="11" viewBox="0 0 11 11"><circle cx="8.2" cy="2.6" r="1.5" fill="#6b70d6"/><rect x="5" y="3.6" width="5.6" height="5.2" rx="1.4" fill="#6b70d6"/><circle cx="5.4" cy="2" r="1.8" fill="#5358c2"/><rect x="0.6" y="3" width="6" height="6" rx="0.7" fill="#4a50b8"/><path d="M2.2 4.6 H5 M3.6 4.6 V7.8" stroke="#fff" stroke-width="0.8"/><circle cx="8.6" cy="7.6" r="2.4" fill="#d5262e"/><path d="M8.6 6.2 V9" stroke="#fff" stroke-width="0.7"/></svg>
<span style="left:347.90px;top:476px;font-size:6.2px;height:9px;line-height:9px;color:#f2f2f2;letter-spacing:-0.457px;">Tea...</span>
<div style="left:332.0px;top:488.6px;width:30.80000000000001px;height:1.4px;background:#ff7a0e;"></div>
<svg style="left:367.0px;top:476.0px;" width="11" height="11" viewBox="0 0 11 11"><g fill="none" stroke="#5ed3f3" stroke-width="0.7"><ellipse cx="5.5" cy="5.5" rx="5" ry="2"/><ellipse cx="5.5" cy="5.5" rx="5" ry="2" transform="rotate(60 5.5 5.5)"/><ellipse cx="5.5" cy="5.5" rx="5" ry="2" transform="rotate(120 5.5 5.5)"/></g><circle cx="5.5" cy="5.5" r="0.9" fill="#5ed3f3"/></svg>
<div style="left:382.2px;top:471.0px;width:29.0px;height:19.0px;background:#4c5a66;"></div>
<svg style="left:385.2px;top:476.4px;" width="11" height="9.9" viewBox="0 0 11 10"><rect x="3.4" y="0.4" width="7.2" height="9" rx="0.8" fill="#2b7cd3"/><rect x="3.4" y="5" width="7.2" height="4.4" fill="#185abd"/><rect x="0.4" y="2" width="6" height="6" rx="0.7" fill="#103f91"/><path d="M1.6 3.6 L2.5 6.6 L3.4 4.4 L4.3 6.6 L5.2 3.6" stroke="#fff" stroke-width="0.7" fill="none"/></svg>
<span style="left:398.00px;top:476px;font-size:6.2px;height:9px;line-height:9px;color:#f2f2f2;letter-spacing:-0.339px;">W...</span>
<div style="left:382.2px;top:488.6px;width:29.0px;height:1.4px;background:#8db7de;"></div>
<svg style="left:415.8px;top:475.8px;" width="11" height="11" viewBox="0 0 11 11"><circle cx="5.5" cy="5.5" r="4.2" fill="none" stroke="#0b2f9c" stroke-width="2.2"/></svg>
<span style="left:429.00px;top:476px;font-size:6.2px;height:9px;line-height:9px;color:#f2f2f2;letter-spacing:-0.416px;">Do...</span>
<div style="left:415.0px;top:488.6px;width:26.600000000000023px;height:1.4px;background:#8db7de;"></div>
<svg style="left:447.6px;top:475.6px;" width="11" height="11" viewBox="0 0 11 11"><path d="M2 1 L4.4 10.6" stroke="#d8d8d8" stroke-width="0.7"/><path d="M2 1.2 C4 0.2 6 2.6 9.6 1.4 L8.4 5.6 C6 6.6 4.6 4.6 3 5.6 Z" fill="#c41e2a"/><path d="M2 1.2 C3.2 0.6 4.2 1 5.2 1.6 L4.6 3.8 C3.8 3.4 3.2 3.4 2.6 3.6 Z" fill="#243a8f"/><path d="M3 2.8 C5 2 6.6 4 9.2 3" stroke="#fff" stroke-width="0.5" fill="none"/></svg>
<span style="left:460.70px;top:476px;font-size:6.2px;height:9px;line-height:9px;color:#f2f2f2;letter-spacing:-0.499px;">A...</span>
<div style="left:446.2px;top:488.6px;width:26.80000000000001px;height:1.4px;background:#8db7de;"></div>
<svg style="left:479.0px;top:476.0px;" width="11" height="11" viewBox="0 0 11 11"><circle cx="6.4" cy="5.4" r="4.6" fill="#e8603c"/><path d="M6.4 0.8 A4.6 4.6 0 0 1 11 5.4 H6.4 Z" fill="#f59b78"/><rect x="0.4" y="2.4" width="6" height="6" rx="0.7" fill="#c43e1c"/><path d="M2.4 7 V3.8 H3.8 C5.2 3.8 5.2 5.8 3.8 5.8 H2.4" fill="none" stroke="#fff" stroke-width="0.8"/></svg>
<span style="left:492.00px;top:476px;font-size:6.2px;height:9px;line-height:9px;color:#f2f2f2;letter-spacing:-0.547px;">Po...</span>
<div style="left:477.6px;top:488.6px;width:26.599999999999966px;height:1.4px;background:#8db7de;"></div>
<svg style="left:509.4px;top:476.2px;" width="11" height="9.9" viewBox="0 0 11 10"><rect x="3.4" y="0.4" width="7.2" height="9" rx="0.8" fill="#21a366"/><rect x="3.4" y="5" width="7.2" height="4.4" fill="#107c41"/><rect x="0.4" y="2" width="6" height="6" rx="0.7" fill="#0e6a37"/><path d="M2 3.4 L4.8 6.8 M4.8 3.4 L2 6.8" stroke="#fff" stroke-width="0.8"/></svg>
<span style="left:522.60px;top:476px;font-size:6.2px;height:9px;line-height:9px;color:#f2f2f2;letter-spacing:-0.428px;">M...</span>
<div style="left:508.6px;top:488.6px;width:26.0px;height:1.4px;background:#8db7de;"></div>
<svg style="left:541.4px;top:475.8px;" width="9.4" height="10.8" viewBox="0 0 9.4 10.8"><path d="M0.8 0.6 H6 L8.6 3 V10.2 H0.8 Z" fill="#fafafa" stroke="#d33a34" stroke-width="0.8"/><rect x="2" y="5.6" width="4.6" height="2.6" fill="#d33a34"/><path d="M3 4.6 C4 3.8 4.4 2.6 4.4 2 C4.6 3 5.2 4 6.4 4.4" fill="none" stroke="#d33a34" stroke-width="0.5"/></svg>
<span style="left:553.60px;top:476px;font-size:6.2px;height:9px;line-height:9px;color:#f2f2f2;letter-spacing:-0.461px;">ds...</span>
<div style="left:539.0px;top:488.6px;width:27.0px;height:1.4px;background:#8db7de;"></div>
<svg style="left:576.6px;top:475.2px;" width="10.8" height="11.6" viewBox="0 0 10.8 11.6"><path d="M0.6 6 C1.4 1.6 9.2 1.6 10 6 C8.8 5 7.8 5 6.8 6 C6 5 4.6 5 3.8 6 C2.8 5 1.8 5 0.6 6 Z" fill="#5aa3e8"/><path d="M5.3 5.6 V10 C5.3 11 4 11 4 10" fill="none" stroke="#d8d8d8" stroke-width="0.6"/><path d="M6.6 0.6 V1.4 M8.4 1 V1.8 M9.8 2.2 V3" stroke="#7fc0ff" stroke-width="0.6"/></svg>
<span style="left:591.40px;top:476px;font-size:6.2px;height:9px;line-height:9px;color:#f2f2f2;letter-spacing:-0.099px;">Rain...</span>
<svg style="left:619.6px;top:477.0px;" width="8.4" height="8.4" viewBox="0 0 8.4 8.4"><path d="M1.4 6 C0 6 0 3.8 1.6 3.8 C1.8 1.6 5.2 1.6 5.6 3.4 C7.4 3.4 7.4 6 5.8 6 Z" fill="#2f8de0"/><circle cx="6.2" cy="6.2" r="1.7" fill="#e03a3a"/></svg>
<svg style="left:630.8px;top:477.0px;" width="8.4" height="8.4" viewBox="0 0 8.4 8.4"><rect x="0.6" y="1.6" width="5.4" height="5.4" rx="0.8" fill="#5a5fd0"/><circle cx="6" cy="2" r="1.3" fill="#7b80e8"/><circle cx="6.2" cy="6.2" r="1.7" fill="#e03a3a"/></svg>
<svg style="left:641.8px;top:476.8px;" width="8.6" height="8.6" viewBox="0 0 8.6 8.6"><rect x="0.4" y="0.8" width="7.8" height="7" rx="1" fill="#1d8ae0"/><circle cx="3.4" cy="4.4" r="1.6" fill="none" stroke="#fff" stroke-width="0.8"/><rect x="5.2" y="4.6" width="3" height="3.2" fill="#8fd0ff"/></svg>
<svg style="left:653.2px;top:476.6px;" width="8.4" height="8.8" viewBox="0 0 8.4 8.8"><ellipse cx="4.2" cy="4.4" rx="3.8" ry="4.1" fill="#14247a" stroke="#2d3fa8" stroke-width="0.4"/><path d="M4.2 3.8 V6.8" stroke="#fff" stroke-width="1.1"/><circle cx="4.2" cy="2.3" r="0.7" fill="#fff"/></svg>
<svg style="left:664.0px;top:476.8px;" width="8.6" height="8.6" viewBox="0 0 8.6 8.6"><rect x="0.3" y="0.3" width="8" height="8" rx="0.6" fill="#e0382f"/><rect x="2" y="3" width="4.6" height="3.6" fill="#fff"/><path d="M2 3 H6.6" stroke="#f5b5b0" stroke-width="0.8"/></svg>
<svg style="left:675.6px;top:476.8px;" width="8.4" height="8.6" viewBox="0 0 8.4 8.6"><path d="M0.6 1.2 H6.8 V5.8 H0.6 Z" fill="#f4f4f4"/><path d="M3.7 1.2 V5.8 M0.6 3.4 H6.8" stroke="#1c2a40" stroke-width="0.6"/><path d="M5.6 4 L7.8 8 H3.4 Z" fill="#f2b01e"/></svg>
<svg style="left:687.6px;top:476.4px;" width="6.4" height="9.4" viewBox="0 0 6.4 9.4"><rect x="1.2" y="1.6" width="3.8" height="6.8" rx="0.8" fill="none" stroke="#e8e8e8" stroke-width="0.7"/><path d="M2.2 0.6 H4" stroke="#e8e8e8" stroke-width="0.6"/></svg>
<svg style="left:697.8px;top:477.2px;" width="8" height="7.6" viewBox="0 0 8 7.6"><path d="M1.4 5.6 C0 5.6 0 3.4 1.6 3.4 C1.8 1.2 5.4 1.2 5.8 3 C7.6 3 7.6 5.6 6 5.6 Z" fill="#d63a32"/><path d="M3 2.6 V4.8 M4.4 2.6 V4.8" stroke="#fff" stroke-width="0.5"/></svg>
<svg style="left:709.0px;top:477.0px;" width="8.4" height="8.2" viewBox="0 0 8.4 8.2"><path d="M0.6 0.8 L2.2 3.6 M3.6 0.8 L2.2 3.6 V7.2" fill="none" stroke="#f0f0f0" stroke-width="0.7"/><rect x="3.4" y="2.6" width="4.2" height="3.2" fill="none" stroke="#f0f0f0" stroke-width="0.7"/><path d="M2.8 7.2 H8" stroke="#f0f0f0" stroke-width="0.7"/></svg>
<svg style="left:720.0px;top:477.4px;" width="7.6" height="7.2" viewBox="0 0 7.6 7.2"><path d="M0.6 2.6 H2 L3.8 1 V6.2 L2 4.6 H0.6 Z" fill="none" stroke="#e8e8e8" stroke-width="0.6"/><path d="M5 2.4 L7 4.8 M7 2.4 L5 4.8" stroke="#e8e8e8" stroke-width="0.5"/></svg>
<span style="left:734.00px;top:472px;font-size:5.3px;height:8px;line-height:8px;color:#f2f2f2;letter-spacing:-0.111px;">10:50 AM</span>
<span style="left:734.30px;top:481px;font-size:5.3px;height:8px;line-height:8px;color:#f2f2f2;letter-spacing:0.009px;">6/4/2025</span>
<svg style="left:765.2px;top:475.8px;" width="11.6" height="11.4" viewBox="0 0 11.6 11.4"><path d="M0.6 0.8 H8 V6 H3.4 L1.8 7.6 V6 H0.6 Z" fill="#1c2740" stroke="#f4f4f4" stroke-width="0.8"/><path d="M2 2.6 H6.6 M2 4.2 H6.6" stroke="#f4f4f4" stroke-width="0.6"/><circle cx="8" cy="7.8" r="3" fill="#1c2740" stroke="#d0d0d0" stroke-width="0.6"/></svg>
<span style="left:770.90px;top:480px;font-size:4.2px;height:7px;line-height:7px;color:#fff;letter-spacing:-0.036px;">21</span>
<svg style="left:791.6px;top:476.8px;" width="8.2" height="8.2" viewBox="0 0 8.2 8.2"><path d="M0 0.98 L3.77 0.33 V3.77 H0 Z M4.43 0.25 L8.2 0 V3.77 H4.43 Z M0 4.43 H3.77 V7.87 L0 7.22 Z M4.43 4.43 H8.2 V8.2 L4.43 7.95 Z" fill="#fff"/></svg>
<svg style="left:813.0px;top:476.0px;" width="10.6" height="10.6" viewBox="0 0 10.6 10.6"><circle cx="6.4" cy="4.2" r="3.4" fill="none" stroke="#f4f4f4" stroke-width="1"/><path d="M4 6.6 L0.8 10" stroke="#f4f4f4" stroke-width="1.2"/></svg>
<svg style="left:836.4px;top:477.2px;" width="8.4" height="7.4" viewBox="0 0 8.4 7.4"><rect x="0.4" y="1.4" width="4.6" height="4.6" fill="none" stroke="#e8e8e8" stroke-width="0.6"/><path d="M6.2 0.6 V6.8 M7.6 1.4 V2.4 M7.6 5 V6" stroke="#e8e8e8" stroke-width="0.7"/><path d="M0.4 0.4 H1.6 M0.4 7 H1.6" stroke="#e8e8e8" stroke-width="0.5"/></svg>
<svg style="left:858.6px;top:475.6px;" width="11" height="11" viewBox="0 0 11 11"><circle cx="5.5" cy="5.5" r="5.2" fill="#1b9de2"/><path d="M0.6 6.4 C0.6 2.4 4 0.4 6.4 0.4 C9.4 0.4 10.8 3 10.6 5 H4.6 C4.6 8 7.6 9.4 10 8.2 C8.8 10.2 6.6 10.8 5 10.6 C2.6 10.2 0.6 8.6 0.6 6.4 Z" fill="#1565c0"/><path d="M1.2 4.2 C2.4 1.6 5.6 0.6 8 1.4 C5.4 1.6 3.6 3 3.2 5.4 Z" fill="#4fd08a"/></svg>
<svg style="left:859.2px;top:482.4px;" width="4.6" height="4.4" viewBox="0 0 4.6 4.4"><rect x="0.4" y="1.4" width="3.8" height="2.8" rx="0.4" fill="#d9922a"/><path d="M1.2 1.4 V0.9 C1.2 0 3.4 0 3.4 0.9 V1.4" fill="none" stroke="#d9922a" stroke-width="0.5"/></svg>
<div style="left:856.0px;top:488.6px;width:17.0px;height:1.4px;background:#8db7de;"></div>
<svg style="left:882.0px;top:476.6px;" width="10.4" height="9.0" viewBox="0 0 10.4 9.0"><path d="M0.4 1 H4 L5 2 H10 V8.4 H0.4 Z" fill="#f2c14a"/><path d="M0.4 3.2 H10 V8.4 H0.4 Z" fill="#fbd972"/><rect x="3.4" y="5.4" width="3.6" height="3" fill="#4a90d9"/></svg>
<div style="left:879.0px;top:488.6px;width:17.0px;height:1.4px;background:#8db7de;"></div>
<svg style="left:904.6px;top:475.8px;" width="11" height="11" viewBox="0 0 11 11"><circle cx="5.5" cy="5.5" r="5.2" fill="#e8453c"/><path d="M5.5 5.5 L1 8.1 A5.2 5.2 0 0 1 1 2.9 Z" fill="#e8453c"/><path d="M5.5 5.5 L1 2.9 A5.2 5.2 0 0 0 3 10.1 Z" fill="#2da94f"/><path d="M0.9 3.2 L5.5 5.5 L3.2 10.2 A5.2 5.2 0 0 1 0.9 3.2 Z" fill="#2da94f"/><path d="M5.5 5.5 H10.7 A5.2 5.2 0 0 1 3.2 10.2 Z" fill="#fdd23e"/><circle cx="5.5" cy="5.5" r="2.4" fill="#fff"/><circle cx="5.5" cy="5.5" r="1.8" fill="#3f82ec"/></svg>
<div style="left:902.0px;top:488.6px;width:17.0px;height:1.4px;background:#8db7de;"></div>
<svg style="left:927.4px;top:476.2px;" width="11" height="9.9" viewBox="0 0 11 10"><rect x="3.6" y="0.6" width="7" height="8.6" rx="0.8" fill="#1f8be0"/><rect x="3.6" y="5" width="7" height="4.2" fill="#0f5fb5"/><rect x="0.4" y="2" width="6" height="6" rx="0.7" fill="#0b58b0"/><circle cx="3.4" cy="5" r="1.6" fill="none" stroke="#fff" stroke-width="0.8"/></svg>
<div style="left:925.0px;top:488.6px;width:17.0px;height:1.4px;background:#8db7de;"></div>
<svg style="left:950.4px;top:476.0px;" width="11" height="11" viewBox="0 0 11 11"><circle cx="8.2" cy="2.6" r="1.5" fill="#6b70d6"/><rect x="5" y="3.6" width="5.6" height="5.2" rx="1.4" fill="#6b70d6"/><circle cx="5.4" cy="2" r="1.8" fill="#5358c2"/><rect x="0.6" y="3" width="6" height="6" rx="0.7" fill="#4a50b8"/><path d="M2.2 4.6 H5 M3.6 4.6 V7.8" stroke="#fff" stroke-width="0.8"/><circle cx="8.6" cy="7.6" r="2.4" fill="#d5262e"/><path d="M8.6 6.2 V9" stroke="#fff" stroke-width="0.7"/></svg>
<div style="left:948.0px;top:488.6px;width:17.0px;height:1.4px;background:#8db7de;"></div>
<svg style="left:973.2px;top:476.0px;" width="11" height="11" viewBox="0 0 11 11"><g fill="none" stroke="#5ed3f3" stroke-width="0.7"><ellipse cx="5.5" cy="5.5" rx="5" ry="2"/><ellipse cx="5.5" cy="5.5" rx="5" ry="2" transform="rotate(60 5.5 5.5)"/><ellipse cx="5.5" cy="5.5" rx="5" ry="2" transform="rotate(120 5.5 5.5)"/></g><circle cx="5.5" cy="5.5" r="0.9" fill="#5ed3f3"/></svg>
<div style="left:990.6px;top:471.0px;width:21.0px;height:19.0px;background:#45535f;"></div>
<svg style="left:995.6px;top:476.4px;" width="11" height="9.9" viewBox="0 0 11 10"><rect x="3.4" y="0.4" width="7.2" height="9" rx="0.8" fill="#2b7cd3"/><rect x="3.4" y="5" width="7.2" height="4.4" fill="#185abd"/><rect x="0.4" y="2" width="6" height="6" rx="0.7" fill="#103f91"/><path d="M1.6 3.6 L2.5 6.6 L3.4 4.4 L4.3 6.6 L5.2 3.6" stroke="#fff" stroke-width="0.7" fill="none"/></svg>
<div style="left:990.6px;top:488.6px;width:21.0px;height:1.4px;background:#8db7de;"></div>
<svg style="left:1019.4px;top:475.8px;" width="11" height="11" viewBox="0 0 11 11"><circle cx="5.5" cy="5.5" r="4.2" fill="none" stroke="#0b2f9c" stroke-width="2.2"/></svg>
<div style="left:1017.0px;top:488.6px;width:17.0px;height:1.4px;background:#8db7de;"></div>
<svg style="left:1042.0px;top:475.6px;" width="11" height="11" viewBox="0 0 11 11"><path d="M2 1 L4.4 10.6" stroke="#d8d8d8" stroke-width="0.7"/><path d="M2 1.2 C4 0.2 6 2.6 9.6 1.4 L8.4 5.6 C6 6.6 4.6 4.6 3 5.6 Z" fill="#c41e2a"/><path d="M2 1.2 C3.2 0.6 4.2 1 5.2 1.6 L4.6 3.8 C3.8 3.4 3.2 3.4 2.6 3.6 Z" fill="#243a8f"/><path d="M3 2.8 C5 2 6.6 4 9.2 3" stroke="#fff" stroke-width="0.5" fill="none"/></svg>
<div style="left:1040.0px;top:488.6px;width:17.0px;height:1.4px;background:#8db7de;"></div>
<svg style="left:1065.0px;top:476.0px;" width="11" height="11" viewBox="0 0 11 11"><circle cx="6.4" cy="5.4" r="4.6" fill="#e8603c"/><path d="M6.4 0.8 A4.6 4.6 0 0 1 11 5.4 H6.4 Z" fill="#f59b78"/><rect x="0.4" y="2.4" width="6" height="6" rx="0.7" fill="#c43e1c"/><path d="M2.4 7 V3.8 H3.8 C5.2 3.8 5.2 5.8 3.8 5.8 H2.4" fill="none" stroke="#fff" stroke-width="0.8"/></svg>
<div style="left:1063.0px;top:488.6px;width:17.0px;height:1.4px;background:#8db7de;"></div>
<svg style="left:1088.0px;top:476.2px;" width="11" height="9.9" viewBox="0 0 11 10"><rect x="3.4" y="0.4" width="7.2" height="9" rx="0.8" fill="#21a366"/><rect x="3.4" y="5" width="7.2" height="4.4" fill="#107c41"/><rect x="0.4" y="2" width="6" height="6" rx="0.7" fill="#0e6a37"/><path d="M2 3.4 L4.8 6.8 M4.8 3.4 L2 6.8" stroke="#fff" stroke-width="0.8"/></svg>
<div style="left:1086.0px;top:488.6px;width:17.0px;height:1.4px;background:#8db7de;"></div>
<svg style="left:1110.6px;top:475.8px;" width="10.4" height="10.4" viewBox="0 0 10.4 10.4"><rect x="0.3" y="0.3" width="9.8" height="9.8" rx="1" fill="#2a0a0a"/><path d="M2 8 C4 6.4 5 3.6 5 2.2 C5.2 3.6 6.4 6.2 8.6 6.6 C6.4 6.2 4 6.8 2 8 Z" fill="none" stroke="#e8322c" stroke-width="0.8"/></svg>
<div style="left:1107.6px;top:488.6px;width:17.40000000000009px;height:1.4px;background:#8db7de;"></div>
<span style="left:1543.50px;top:472px;font-size:5.3px;height:8px;line-height:8px;color:#f2f2f2;letter-spacing:-0.111px;">10:50 AM</span>
<span style="left:1543.80px;top:481px;font-size:5.3px;height:8px;line-height:8px;color:#f2f2f2;letter-spacing:0.022px;">6/4/2025</span>
</div>
</body></html>
